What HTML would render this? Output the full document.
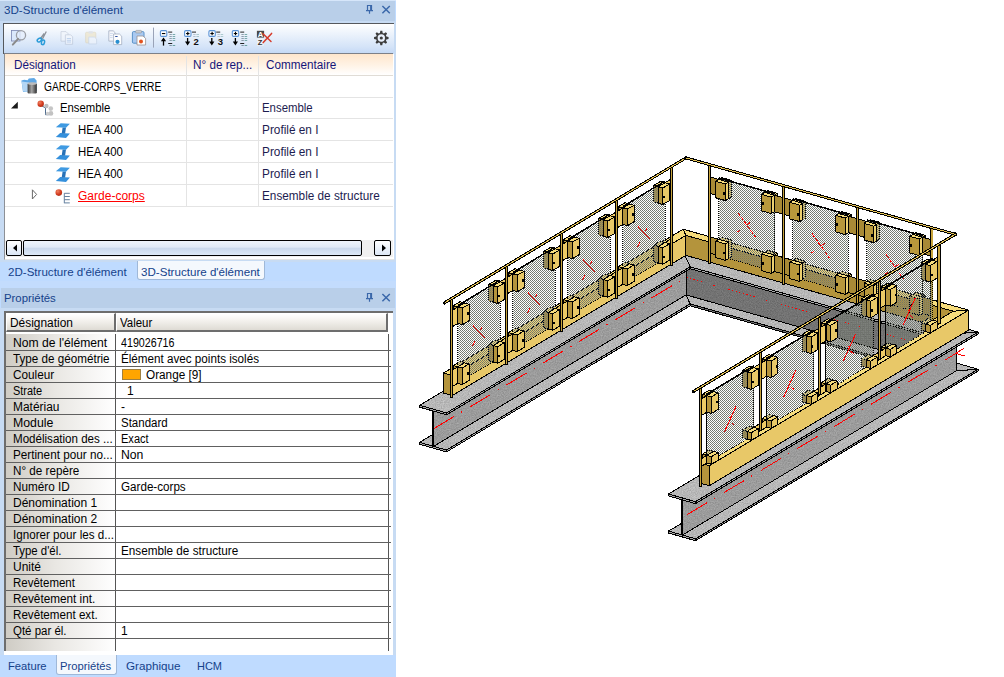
<!DOCTYPE html>
<html><head><meta charset="utf-8"><title>3D-Structure</title><style>
html,body{margin:0;padding:0;background:#fff;}
body{width:1004px;height:677px;position:relative;overflow:hidden;font-family:"Liberation Sans",sans-serif;}
.abs{position:absolute;white-space:nowrap;}
.t11{font-size:11.5px;line-height:14px;}
.t12h{font-size:12px;line-height:15px;color:#15157a;}
.t12r{font-size:12px;line-height:15px;color:#000;}
.red{color:#ff0000;text-decoration:underline;}
.t12p{font-size:12px;line-height:16px;color:#000;margin-top:1px;}
.hc{box-sizing:border-box;background:linear-gradient(#ffffff 0%,#f4f2ee 40%,#dedbd4 100%);border-top:1px solid #fff;border-left:1px solid #fff;border-right:2px solid #6d6d6d;border-bottom:2px solid #6d6d6d;}
</style></head><body>
<div class="abs" style="left:0;top:0;width:396px;height:677px;background:#bfdbff"></div>
<div class="abs" style="left:0;top:0;width:396px;height:1px;background:#d6e6fa"></div>
<div class="abs" style="left:0;top:1px;width:395px;height:20px;background:#b9cfe9"></div>
<div class="abs t11" style="left:4px;top:3px;color:#15428b;transform:scaleX(1.0086);transform-origin:0 0" id="t1">3D-Structure d'élément</div>
<svg class="abs" style="left:364px;top:4px" width="30" height="12" viewBox="0 0 30 12"><g fill="none" stroke="#3b68aa" stroke-width="1.2"><path d="M3.5 1.5h4v5h-4z M2 6.6h7 M5.5 6.6v3.2" /><path d="M6.9 1.5v5" stroke-width="1.6"/><path d="M18.4 2l7.4 7.2 M25.8 2l-7.4 7.2" stroke-width="1.5"/></g></svg>
<div class="abs" style="left:0;top:21px;width:396px;height:241px;background:#c7dbf3"></div>
<div class="abs" style="left:3px;top:23px;width:391px;height:31px;background:linear-gradient(#ffffff 0%,#eef4fc 30%,#d5e4f8 75%,#c3d8f5 100%);border-top:1px solid #55585c;border-left:1px solid #55585c;box-sizing:border-box"></div>
<div class="abs" style="left:4px;top:53px;width:389px;height:1px;background:#7d8088"></div>
<svg class="abs" style="left:0;top:0" width="396" height="60" viewBox="0 0 396 60">
<rect x="11.5" y="30.5" width="8.5" height="10.5" fill="#dbe8fb" stroke="#7a86b0" stroke-width="0.8"/>
<circle cx="21" cy="35.2" r="4.6" fill="#e4eefc" fill-opacity="0.75" stroke="#9a9da4" stroke-width="1.3"/>
<path d="M18.1 38.9L12.8 44.6" stroke="#8a8a8a" stroke-width="2" stroke-linecap="round"/>
<path d="M46.3 31.5L42.2 39.5 M44.2 33.5L40.2 39" stroke="#8d9299" stroke-width="1.3" fill="none"/>
<ellipse cx="39.4" cy="40" rx="2.4" ry="1.6" transform="rotate(-35 39.4 40)" fill="none" stroke="#2a9bd8" stroke-width="1.5"/>
<ellipse cx="43" cy="42.3" rx="1.5" ry="2.4" transform="rotate(15 43 42.3)" fill="none" stroke="#2a9bd8" stroke-width="1.5"/>
<g opacity="0.55"><path d="M61 31.6h5l2 2v7.6h-7z" fill="#f4f7fb" stroke="#a9b4c6" stroke-width="0.8"/><path d="M65.4 34.8h5.2l2 2v7.5h-7.2z" fill="#f8fafd" stroke="#a9b4c6" stroke-width="0.8"/><path d="M66.8 38.5h4.2M66.8 40.3h4.2M66.8 42h4.2" stroke="#8fb0dc" stroke-width="0.8"/></g>
<g opacity="0.6"><rect x="85.6" y="32.3" width="10.2" height="10.6" rx="1" fill="#efe3c0" stroke="#d8cba8" stroke-width="0.7"/><rect x="88.4" y="31.2" width="4.6" height="2.2" rx="1" fill="#d5d8de"/><path d="M88.8 37.1h5.6l2.2 2v4.8h-7.8z" fill="#f2f6fc" stroke="#b9c6dc" stroke-width="0.7"/></g>
<path d="M108.8 30.8h4.4l1.9 1.9v8.4h-6.3z" fill="#f6f8fc" stroke="#a3aec2" stroke-width="0.8"/>
<path d="M113.6 34h5.8l2.3 2.2v8.4h-8.1z" fill="#fff" stroke="#a3aec2" stroke-width="0.8"/>
<rect x="115.2" y="36" width="2.4" height="1" fill="#2c4f9e"/><path d="M110 33.5h3M110 35.5h2.6M110 37.5h2.6" stroke="#c5d3ea" stroke-width="0.7"/>
<circle cx="117.5" cy="41.8" r="2.1" fill="#2a8fd0"/>
<rect x="132.4" y="31.6" width="11.6" height="11.6" rx="1.2" fill="#a9c9f1" stroke="#5b93c9" stroke-width="1"/>
<rect x="135.6" y="30.4" width="6" height="2.6" rx="1" fill="#c9ccd2" stroke="#8e939b" stroke-width="0.6"/>
<path d="M137 36h6l2.6 2.4v6.6h-8.6z" fill="#fff" stroke="#9a8f8f" stroke-width="0.8"/>
<circle cx="141" cy="41.5" r="2" fill="#e2531f"/>
<rect x="153" y="27.6" width="1" height="20" fill="#9aa3b8"/>
<rect x="160.4" y="30.6" width="6.4" height="5.8" rx="1.2" fill="#fff" stroke="#5a92d6" stroke-width="1.1"/>
<rect x="161.9" y="33" width="3.4" height="1.1" fill="#000"/>
<path d="M163.5 45.6V39.5" stroke="#000" stroke-width="1.3"/><path d="M160.9 41.2L163.5 37.6L166.1 41.2z" fill="#000"/>
<rect x="168.2" y="31.6" width="4" height="1" fill="#222"/>
<rect x="169.39999999999998" y="34" width="2.4" height="0.9" fill="#7a8a9a" opacity="0.9"/><rect x="172.6" y="34" width="2.6" height="0.9" fill="#5f9a9a" opacity="0.9"/>
<rect x="169.39999999999998" y="36" width="2.4" height="0.9" fill="#7a8a9a" opacity="0.9"/><rect x="172.6" y="36" width="2.6" height="0.9" fill="#5f9a9a" opacity="0.9"/>
<rect x="169.39999999999998" y="38" width="2.4" height="0.9" fill="#7a8a9a" opacity="0.9"/><rect x="172.6" y="38" width="2.6" height="0.9" fill="#5f9a9a" opacity="0.9"/>
<rect x="169.39999999999998" y="40" width="2.4" height="0.9" fill="#7a8a9a" opacity="0.9"/><rect x="172.6" y="40" width="2.6" height="0.9" fill="#5f9a9a" opacity="0.9"/>
<rect x="168.2" y="43" width="4" height="1" fill="#222"/>
<rect x="169.39999999999998" y="45" width="2.4" height="0.9" fill="#7a8a9a"/><rect x="172.6" y="45" width="2.6" height="0.9" fill="#5f9a9a"/>
<rect x="184.6" y="30.6" width="6.4" height="5.8" rx="1.2" fill="#fff" stroke="#5a92d6" stroke-width="1.1"/>
<rect x="186.1" y="33" width="3.4" height="1.1" fill="#000"/>
<rect x="187.25" y="31.8" width="1.1" height="3.4" fill="#000"/>
<path d="M187.6 38V43.5" stroke="#000" stroke-width="1.3"/><path d="M185.0 41.6L187.6 45.4L190.2 41.6z" fill="#000"/>
<rect x="192" y="31.6" width="4" height="1" fill="#222"/>
<rect x="193.2" y="34" width="2.4" height="0.9" fill="#7a8a9a" opacity="0.5"/><rect x="196.4" y="34" width="2.6" height="0.9" fill="#5f9a9a" opacity="0.5"/>
<rect x="193.2" y="36" width="2.4" height="0.9" fill="#7a8a9a" opacity="0.5"/><rect x="196.4" y="36" width="2.6" height="0.9" fill="#5f9a9a" opacity="0.5"/>
<text x="193.6" y="44.6" font-family="Liberation Sans, sans-serif" font-weight="bold" font-size="9.5" fill="#111">2</text>
<rect x="208.9" y="30.6" width="6.4" height="5.8" rx="1.2" fill="#fff" stroke="#5a92d6" stroke-width="1.1"/>
<rect x="210.4" y="33" width="3.4" height="1.1" fill="#000"/>
<rect x="211.55" y="31.8" width="1.1" height="3.4" fill="#000"/>
<path d="M211.8 38V43.5" stroke="#000" stroke-width="1.3"/><path d="M209.20000000000002 41.6L211.8 45.4L214.4 41.6z" fill="#000"/>
<rect x="216.2" y="31.6" width="4" height="1" fill="#222"/>
<rect x="217.39999999999998" y="34" width="2.4" height="0.9" fill="#7a8a9a" opacity="0.5"/><rect x="220.6" y="34" width="2.6" height="0.9" fill="#5f9a9a" opacity="0.5"/>
<rect x="217.39999999999998" y="36" width="2.4" height="0.9" fill="#7a8a9a" opacity="0.5"/><rect x="220.6" y="36" width="2.6" height="0.9" fill="#5f9a9a" opacity="0.5"/>
<text x="217.8" y="44.6" font-family="Liberation Sans, sans-serif" font-weight="bold" font-size="9.5" fill="#111">3</text>
<rect x="232.3" y="30.6" width="6.4" height="5.8" rx="1.2" fill="#fff" stroke="#5a92d6" stroke-width="1.1"/>
<rect x="233.8" y="33" width="3.4" height="1.1" fill="#000"/>
<rect x="234.95000000000002" y="31.8" width="1.1" height="3.4" fill="#000"/>
<path d="M235.4 38V43.5" stroke="#000" stroke-width="1.3"/><path d="M232.8 41.6L235.4 45.4L238.0 41.6z" fill="#000"/>
<rect x="240.2" y="31.6" width="4" height="1" fill="#222"/>
<rect x="241.39999999999998" y="34" width="2.4" height="0.9" fill="#7a8a9a" opacity="0.9"/><rect x="244.6" y="34" width="2.6" height="0.9" fill="#5f9a9a" opacity="0.9"/>
<rect x="241.39999999999998" y="36" width="2.4" height="0.9" fill="#7a8a9a" opacity="0.9"/><rect x="244.6" y="36" width="2.6" height="0.9" fill="#5f9a9a" opacity="0.9"/>
<rect x="241.39999999999998" y="38" width="2.4" height="0.9" fill="#7a8a9a" opacity="0.9"/><rect x="244.6" y="38" width="2.6" height="0.9" fill="#5f9a9a" opacity="0.9"/>
<rect x="241.39999999999998" y="40" width="2.4" height="0.9" fill="#7a8a9a" opacity="0.9"/><rect x="244.6" y="40" width="2.6" height="0.9" fill="#5f9a9a" opacity="0.9"/>
<rect x="240.2" y="43" width="4" height="1" fill="#222"/>
<rect x="241.39999999999998" y="45" width="2.4" height="0.9" fill="#7a8a9a"/><rect x="244.6" y="45" width="2.6" height="0.9" fill="#5f9a9a"/>
<rect x="256.9" y="30.8" width="7.2" height="6.8" fill="#4a4a4a"/>
<text x="257.7" y="37" font-family="Liberation Sans, sans-serif" font-weight="bold" font-size="7.5" fill="#fff">A</text>
<rect x="257.2" y="38.8" width="6.6" height="6.8" fill="#f0f2f6"/>
<text x="257.8" y="45.2" font-family="Liberation Sans, sans-serif" font-weight="bold" font-size="7.5" fill="#333">Z</text>
<path d="M263 33.8L271 41.5 M271.6 33.4L263.2 42.6" stroke="#d63a2a" stroke-width="1.5" stroke-linecap="round" fill="none"/>
<path d="M379.89 32.89 L380.35 30.76 L382.25 30.76 L382.71 32.89 L383.91 33.39 L385.75 32.21 L387.09 33.55 L385.91 35.39 L386.41 36.59 L388.54 37.05 L388.54 38.95 L386.41 39.41 L385.91 40.61 L387.09 42.45 L385.75 43.79 L383.91 42.61 L382.71 43.11 L382.25 45.24 L380.35 45.24 L379.89 43.11 L378.69 42.61 L376.85 43.79 L375.51 42.45 L376.69 40.61 L376.19 39.41 L374.06 38.95 L374.06 37.05 L376.19 36.59 L376.69 35.39 L375.51 33.55 L376.85 32.21 L378.69 33.39z" fill="#3d3d3d"/>
<circle cx="381.3" cy="38" r="3.7" fill="#e9f0fb"/>
<circle cx="381.3" cy="38" r="1.6" fill="#3d3d3d"/>
</svg>
<div class="abs" style="left:4px;top:54px;width:390px;height:206px;background:#fff;border-left:1px solid #8c9096;border-bottom:1px solid #e3e3e3;box-sizing:border-box"></div>
<div class="abs" style="left:5px;top:54px;width:388px;height:22px;background:linear-gradient(#ffe6cc 0%,#fff3e6 55%,#ffffff 100%);border-bottom:1px solid #e0dcd6;box-sizing:border-box"></div>
<div class="abs" style="left:186px;top:56px;width:1px;height:150px;background:#e4e4e4"></div>
<div class="abs" style="left:258px;top:56px;width:1px;height:150px;background:#e4e4e4"></div>
<div class="abs t12h" style="left:14px;top:58px;transform:scaleX(0.9736);transform-origin:0 0" id="h1">Désignation</div>
<div class="abs t12h" style="left:193px;top:58px;transform:scaleX(0.9749);transform-origin:0 0" id="h2">N° de rep...</div>
<div class="abs t12h" style="left:266px;top:58px;transform:scaleX(0.976);transform-origin:0 0" id="h3">Commentaire</div>
<div class="abs" style="left:5px;top:97px;width:388px;height:1px;background:#e4e4e4"></div>
<div class="abs t12r" style="left:44px;top:80px;transform:scaleX(0.8539);transform-origin:0 0" id="r1a">GARDE-CORPS_VERRE</div>
<div class="abs" style="left:5px;top:118px;width:388px;height:1px;background:#e4e4e4"></div>
<div class="abs t12r" style="left:60px;top:101px;transform:scaleX(0.9443);transform-origin:0 0" id="r2a">Ensemble</div>
<div class="abs t12r" style="left:262px;top:101px;color:#1c1c50;transform:scaleX(0.9499);transform-origin:0 0" id="r2b">Ensemble</div>
<div class="abs" style="left:5px;top:140px;width:388px;height:1px;background:#e4e4e4"></div>
<div class="abs t12r" style="left:78px;top:123px;transform:scaleX(0.9478);transform-origin:0 0" id="r3a">HEA 400</div>
<div class="abs t12r" style="left:262px;top:123px;color:#1c1c50;transform:scaleX(0.9847);transform-origin:0 0" id="r3b">Profilé en I</div>
<div class="abs" style="left:5px;top:162px;width:388px;height:1px;background:#e4e4e4"></div>
<div class="abs t12r" style="left:78px;top:145px;transform:scaleX(0.9478);transform-origin:0 0" id="r4a">HEA 400</div>
<div class="abs t12r" style="left:262px;top:145px;color:#1c1c50;transform:scaleX(0.9847);transform-origin:0 0" id="r4b">Profilé en I</div>
<div class="abs" style="left:5px;top:184px;width:388px;height:1px;background:#e4e4e4"></div>
<div class="abs t12r" style="left:78px;top:167px;transform:scaleX(0.9478);transform-origin:0 0" id="r5a">HEA 400</div>
<div class="abs t12r" style="left:262px;top:167px;color:#1c1c50;transform:scaleX(0.9847);transform-origin:0 0" id="r5b">Profilé en I</div>
<div class="abs" style="left:5px;top:206px;width:388px;height:1px;background:#e4e4e4"></div>
<div class="abs t12r red" style="left:78px;top:189px;transform:scaleX(1.0015);transform-origin:0 0" id="r6a">Garde-corps</div>
<div class="abs t12r" style="left:262px;top:189px;color:#1c1c50;transform:scaleX(0.9803);transform-origin:0 0" id="r6b">Ensemble de structure</div>
<svg class="abs" style="left:0;top:76px" width="100" height="135" viewBox="0 76 100 135">
<defs><linearGradient id="cyl" x1="0" x2="1"><stop offset="0" stop-color="#3a3a3a"/><stop offset="0.45" stop-color="#a5a5a5"/><stop offset="1" stop-color="#2e2e2e"/></linearGradient><radialGradient id="rs" cx="0.35" cy="0.3" r="0.8"><stop offset="0" stop-color="#f08060"/><stop offset="0.6" stop-color="#d23a1e"/><stop offset="1" stop-color="#a52a12"/></radialGradient></defs>
<path d="M21.4 80.6l2.8-0.8 3.4 0.4 1.2-1.6 5.4-0.6 2.4 2.4v10.6l-13.6 0.8z" fill="#5fa8e6"/>
<path d="M21.6 81.6l7.4 1 0.6 9-6.6-0.6z" fill="#b4d6f4"/>
<rect x="27.6" y="83.4" width="9.2" height="10" rx="1.2" fill="url(#cyl)"/>
<ellipse cx="32.2" cy="83.6" rx="4.6" ry="1.3" fill="#bdbdbd"/>
<path d="M17.8 101.8V108.6H11z" fill="#1a1a1a"/>
<path d="M41.5 105.5l4 2.6v6.6h4" fill="none" stroke="#4f6d8f" stroke-width="1"/>
<circle cx="46.4" cy="106" r="2.2" fill="#bdbdbd"/><circle cx="50.8" cy="108.6" r="2.3" fill="#c6c6c6"/><circle cx="51" cy="113.4" r="2.3" fill="#c2c2c2"/><circle cx="47.6" cy="113.6" r="1.8" fill="#cdcdcd"/>
<circle cx="40.7" cy="103.8" r="3.2" fill="url(#rs)"/>
<g transform="translate(0 0.0)"><path d="M60.2 133L69.9 133.5L66 137.9L55.8 136.9z" fill="#3590dc"/><path d="M62.6 127.4H66L65.1 133.6H61.7z" fill="#2772b8"/><path d="M60.7 123.3L69.9 123.8L66 127.7L55.8 127.2z" fill="#3f9ae2"/></g>
<g transform="translate(0 22.0)"><path d="M60.2 133L69.9 133.5L66 137.9L55.8 136.9z" fill="#3590dc"/><path d="M62.6 127.4H66L65.1 133.6H61.7z" fill="#2772b8"/><path d="M60.7 123.3L69.9 123.8L66 127.7L55.8 127.2z" fill="#3f9ae2"/></g>
<g transform="translate(0 44.0)"><path d="M60.2 133L69.9 133.5L66 137.9L55.8 136.9z" fill="#3590dc"/><path d="M62.6 127.4H66L65.1 133.6H61.7z" fill="#2772b8"/><path d="M60.7 123.3L69.9 123.8L66 127.7L55.8 127.2z" fill="#3f9ae2"/></g>
<path d="M32.4 189.8L36.6 194.4L32.4 199z" fill="#fff" stroke="#6a6a6a" stroke-width="1"/>
<path d="M64.3 193.2V203.2 M64.3 193.3H69.8 M64.3 196.5H69.8 M64.3 199.7H69.8 M64.3 202.9H69.8" stroke="#64809f" stroke-width="1" fill="none"/>
<circle cx="58.8" cy="192.6" r="3.3" fill="url(#rs)"/>
</svg>
<div class="abs" style="left:5px;top:240px;width:388px;height:17px;background:#f0f0f0"></div>
<div class="abs" style="left:6px;top:240px;width:16px;height:16px;border:1px solid #000;border-radius:2px;box-sizing:border-box;background:linear-gradient(#fff,#dbe6f5)"></div>
<div class="abs" style="left:23px;top:240px;width:339px;height:16px;border:1px solid #000;border-radius:2px;box-sizing:border-box;background:linear-gradient(#eef4fb 0%,#dfe9f6 45%,#c9d8ec 50%,#dde8f6 100%)"></div>
<div class="abs" style="left:374px;top:240px;width:17px;height:16px;border:1px solid #000;border-radius:2px;box-sizing:border-box;background:linear-gradient(#fff,#dbe6f5)"></div>
<svg class="abs" style="left:6px;top:240px" width="388" height="16"><path d="M11 4.5v7l-4-3.5z M376 4.5v7l4-3.5z" fill="#000"/></svg>
<div class="abs" style="left:0;top:262px;width:396px;height:20px;background:#bfdbff"></div>
<div class="abs" style="left:137px;top:261px;width:128px;height:19px;background:#f4f8fd;border:1px solid #9fb8d8;border-top:none;border-radius:0 0 3px 3px;box-sizing:border-box"></div>
<div class="abs t11" style="left:8px;top:265px;color:#15428b;transform:scaleX(1.006);transform-origin:0 0" id="tb1">2D-Structure d'élément</div>
<div class="abs t11" style="left:141px;top:265px;color:#15428b;transform:scaleX(1.0077);transform-origin:0 0" id="tb2">3D-Structure d'élément</div>
<div class="abs" style="left:0;top:281px;width:396px;height:7px;background:#c3dcfd"></div>
<div class="abs" style="left:1px;top:288px;width:394px;height:20px;background:#b9cfe9"></div>
<div class="abs t11" style="left:4px;top:291px;color:#15428b;transform:scaleX(0.9881);transform-origin:0 0" id="t2">Propriétés</div>
<svg class="abs" style="left:364px;top:292px" width="30" height="12" viewBox="0 0 30 12"><g fill="none" stroke="#3b68aa" stroke-width="1.2"><path d="M3.5 1.5h4v5h-4z M2 6.6h7 M5.5 6.6v3.2" /><path d="M6.9 1.5v5" stroke-width="1.6"/><path d="M18.4 2l7.4 7.2 M25.8 2l-7.4 7.2" stroke-width="1.5"/></g></svg>
<div class="abs" style="left:0;top:308px;width:396px;height:347px;background:#c7dbf3"></div>
<div class="abs" style="left:4px;top:311px;width:389px;height:344px;background:#fff;border-top:2px solid #6d6d6d;border-left:2px solid #6d6d6d;box-sizing:border-box"></div>
<div class="abs hc" style="left:6px;top:313px;width:110px;height:19px"></div>
<div class="abs hc" style="left:116px;top:313px;width:272px;height:19px"></div>
<div class="abs t12p" style="left:10px;top:314px;transform:scaleX(0.9925);transform-origin:0 0" id="ph1">Désignation</div>
<div class="abs t12p" style="left:120px;top:314px;transform:scaleX(0.9528);transform-origin:0 0" id="ph2">Valeur</div>
<div class="abs" style="left:6px;top:334px;width:110px;height:317px;background:linear-gradient(90deg,#cfccc5 0%,#e9e7e3 45%,#ffffff 100%)"></div>
<div class="abs" style="left:115px;top:334px;width:1px;height:317px;background:#555"></div>
<div class="abs" style="left:388px;top:334px;width:1px;height:317px;background:#555"></div>
<div class="abs" style="left:6px;top:350px;width:385px;height:1px;background:#606060"></div>
<div class="abs t12p" style="left:13.4px;top:334px;transform:scaleX(1.013);transform-origin:0 0" id="p0a">Nom de l'élément</div>
<div class="abs t12p" style="left:121px;top:334px;transform:scaleX(0.8905);transform-origin:0 0" id="p0b">419026716</div>
<div class="abs" style="left:6px;top:366px;width:385px;height:1px;background:#606060"></div>
<div class="abs t12p" style="left:13.4px;top:350px;transform:scaleX(0.9719);transform-origin:0 0" id="p1a">Type de géométrie</div>
<div class="abs t12p" style="left:121px;top:350px;transform:scaleX(0.9713);transform-origin:0 0" id="p1b">Élément avec points isolés</div>
<div class="abs" style="left:6px;top:382px;width:385px;height:1px;background:#606060"></div>
<div class="abs t12p" style="left:13.4px;top:366px;transform:scaleX(0.9804);transform-origin:0 0" id="p2a">Couleur</div>
<div class="abs t12p" style="left:146px;top:366px;transform:scaleX(0.9805);transform-origin:0 0" id="p2b">Orange [9]</div>
<div class="abs" style="left:6px;top:398px;width:385px;height:1px;background:#606060"></div>
<div class="abs t12p" style="left:13.4px;top:382px;transform:scaleX(0.9123);transform-origin:0 0" id="p3a">Strate</div>
<div class="abs t12p" style="left:127px;top:382px" id="p3b">1</div>
<div class="abs" style="left:6px;top:414px;width:385px;height:1px;background:#606060"></div>
<div class="abs t12p" style="left:13.4px;top:398px;transform:scaleX(0.994);transform-origin:0 0" id="p4a">Matériau</div>
<div class="abs t12p" style="left:121px;top:398px" id="p4b">-</div>
<div class="abs" style="left:6px;top:430px;width:385px;height:1px;background:#606060"></div>
<div class="abs t12p" style="left:13.4px;top:414px;transform:scaleX(1.0267);transform-origin:0 0" id="p5a">Module</div>
<div class="abs t12p" style="left:121px;top:414px;transform:scaleX(0.9589);transform-origin:0 0" id="p5b">Standard</div>
<div class="abs" style="left:6px;top:446px;width:385px;height:1px;background:#606060"></div>
<div class="abs t12p" style="left:13.4px;top:430px;transform:scaleX(0.9644);transform-origin:0 0" id="p6a">Modélisation des ...</div>
<div class="abs t12p" style="left:121px;top:430px;transform:scaleX(0.9195);transform-origin:0 0" id="p6b">Exact</div>
<div class="abs" style="left:6px;top:462px;width:385px;height:1px;background:#606060"></div>
<div class="abs t12p" style="left:13.4px;top:446px;transform:scaleX(0.9768);transform-origin:0 0" id="p7a">Pertinent pour no...</div>
<div class="abs t12p" style="left:121px;top:446px;transform:scaleX(1.0175);transform-origin:0 0" id="p7b">Non</div>
<div class="abs" style="left:6px;top:478px;width:385px;height:1px;background:#606060"></div>
<div class="abs t12p" style="left:13.4px;top:462px;transform:scaleX(0.9727);transform-origin:0 0" id="p8a">N° de repère</div>
<div class="abs" style="left:6px;top:494px;width:385px;height:1px;background:#606060"></div>
<div class="abs t12p" style="left:13.4px;top:478px;transform:scaleX(0.9775);transform-origin:0 0" id="p9a">Numéro ID</div>
<div class="abs t12p" style="left:121px;top:478px;transform:scaleX(0.97);transform-origin:0 0" id="p9b">Garde-corps</div>
<div class="abs" style="left:6px;top:510px;width:385px;height:1px;background:#606060"></div>
<div class="abs t12p" style="left:13.4px;top:494px;transform:scaleX(1.0017);transform-origin:0 0" id="p10a">Dénomination 1</div>
<div class="abs" style="left:6px;top:526px;width:385px;height:1px;background:#606060"></div>
<div class="abs t12p" style="left:13.4px;top:510px;transform:scaleX(1.0017);transform-origin:0 0" id="p11a">Dénomination 2</div>
<div class="abs" style="left:6px;top:542px;width:385px;height:1px;background:#606060"></div>
<div class="abs t12p" style="left:13.4px;top:526px;transform:scaleX(0.9697);transform-origin:0 0" id="p12a">Ignorer pour les d...</div>
<div class="abs" style="left:6px;top:558px;width:385px;height:1px;background:#606060"></div>
<div class="abs t12p" style="left:13.4px;top:542px;transform:scaleX(0.9492);transform-origin:0 0" id="p13a">Type d'él.</div>
<div class="abs t12p" style="left:121px;top:542px;transform:scaleX(0.9762);transform-origin:0 0" id="p13b">Ensemble de structure</div>
<div class="abs" style="left:6px;top:574px;width:385px;height:1px;background:#606060"></div>
<div class="abs t12p" style="left:13.4px;top:558px;transform:scaleX(0.9998);transform-origin:0 0" id="p14a">Unité</div>
<div class="abs" style="left:6px;top:590px;width:385px;height:1px;background:#606060"></div>
<div class="abs t12p" style="left:13.4px;top:574px;transform:scaleX(0.9568);transform-origin:0 0" id="p15a">Revêtement</div>
<div class="abs" style="left:6px;top:606px;width:385px;height:1px;background:#606060"></div>
<div class="abs t12p" style="left:13.4px;top:590px;transform:scaleX(0.9781);transform-origin:0 0" id="p16a">Revêtement int.</div>
<div class="abs" style="left:6px;top:622px;width:385px;height:1px;background:#606060"></div>
<div class="abs t12p" style="left:13.4px;top:606px;transform:scaleX(0.9683);transform-origin:0 0" id="p17a">Revêtement ext.</div>
<div class="abs" style="left:6px;top:638px;width:385px;height:1px;background:#606060"></div>
<div class="abs t12p" style="left:13.4px;top:622px;transform:scaleX(0.955);transform-origin:0 0" id="p18a">Qté par él.</div>
<div class="abs t12p" style="left:121px;top:622px" id="p18b">1</div>
<div class="abs" style="left:122px;top:369px;width:19px;height:11px;background:#ffa500;border:1px solid #a08040;box-sizing:border-box"></div>
<div class="abs" style="left:4px;top:651px;width:389px;height:4px;background:#fff"></div>
<div class="abs" style="left:0;top:655px;width:396px;height:22px;background:#bfdbff"></div>
<div class="abs" style="left:56px;top:655px;width:61px;height:20px;background:#f4f8fd;border:1px solid #9fb8d8;border-top:none;border-radius:0 0 3px 3px;box-sizing:border-box"></div>
<div class="abs t11" style="left:8px;top:659px;color:#15428b;transform:scaleX(0.9737);transform-origin:0 0" id="bt1">Feature</div>
<div class="abs t11" style="left:60px;top:659px;color:#15428b;transform:scaleX(0.9767);transform-origin:0 0" id="bt2">Propriétés</div>
<div class="abs t11" style="left:126px;top:659px;color:#15428b;transform:scaleX(1.0145);transform-origin:0 0" id="bt3">Graphique</div>
<div class="abs t11" style="left:197px;top:659px;color:#15428b;transform:scaleX(0.9541);transform-origin:0 0" id="bt4">HCM</div>
<svg class="abs" style="left:0;top:0" width="1004" height="677" viewBox="0 0 1004 677" shape-rendering="crispEdges"><defs>
<pattern id="glass" width="2" height="2" patternUnits="userSpaceOnUse"><rect x="0" y="0" width="1" height="1" fill="#70766c"/><rect x="1" y="1" width="1" height="1" fill="#7c8278"/></pattern>
<filter id="noise" x="0" y="0" width="100%" height="100%"><feTurbulence type="fractalNoise" baseFrequency="0.9" numOctaves="1" seed="3" result="n"/><feColorMatrix in="n" type="matrix" values="0 0 0 0 0  0 0 0 0 0  0 0 0 0 0  1.6 0 0 0 -0.62"/><feComposite in2="SourceGraphic" operator="in"/></filter>
<filter id="fTop" color-interpolation-filters="sRGB" x="0" y="0" width="100%" height="100%"><feTurbulence type="fractalNoise" baseFrequency="0.85" numOctaves="2" seed="2"/><feColorMatrix type="matrix" values="0.24 0 0 0 0.60  0.24 0 0 0 0.60  0.24 0 0 0 0.60  0 0 0 0 1"/></filter>
<filter id="fB" color-interpolation-filters="sRGB" x="0" y="0" width="100%" height="100%"><feTurbulence type="fractalNoise" baseFrequency="0.85" numOctaves="2" seed="5"/><feColorMatrix type="matrix" values="0.2 0 0 0 0.51  0.2 0 0 0 0.51  0.2 0 0 0 0.51  0 0 0 0 1"/></filter>
<filter id="fA" color-interpolation-filters="sRGB" x="0" y="0" width="100%" height="100%"><feTurbulence type="fractalNoise" baseFrequency="0.85" numOctaves="2" seed="9"/><feColorMatrix type="matrix" values="0.18 0 0 0 0.36  0.18 0 0 0 0.36  0.18 0 0 0 0.36  0 0 0 0 1"/></filter>
<pattern id="stTop" width="200" height="200" patternUnits="userSpaceOnUse"><rect width="200" height="200" fill="#b9b9b9" filter="url(#fTop)"/></pattern>
<pattern id="stB" width="200" height="200" patternUnits="userSpaceOnUse"><rect width="200" height="200" fill="#9e9e9e" filter="url(#fB)"/></pattern>
<pattern id="stA" width="200" height="200" patternUnits="userSpaceOnUse"><rect width="200" height="200" fill="#7d7d7d" filter="url(#fA)"/></pattern>
</defs>
<g stroke-linejoin="round"><polygon points="690.1,303.9 932.6,372.7 978.1,369.2 681.7,285.2" fill="url(#stTop)" stroke="#000" stroke-width="1" />
<polygon points="690.1,305.8 932.6,374.6 932.6,372.7 690.1,303.9" fill="url(#stA)" stroke="#000" stroke-width="1" />
<polygon points="686.0,294.9 954.5,371.0 954.5,335.8 686.0,259.7" fill="url(#stA)" stroke="#000" stroke-width="1" />
<line x1="686.4" y1="277.4" x2="703.0" y2="282.1" stroke="#f00" stroke-width="1" stroke-dasharray="1.3 2.4"/>
<line x1="713.3" y1="285.0" x2="714.7" y2="285.4" stroke="#f00" stroke-width="1" />
<line x1="728.5" y1="289.3" x2="755.6" y2="297.0" stroke="#f00" stroke-width="1" stroke-dasharray="1.3 2.4"/>
<line x1="765.9" y1="299.9" x2="767.4" y2="300.3" stroke="#f00" stroke-width="1" />
<line x1="781.1" y1="304.2" x2="808.2" y2="311.9" stroke="#f00" stroke-width="1" stroke-dasharray="1.3 2.4"/>
<line x1="818.6" y1="314.9" x2="820.0" y2="315.3" stroke="#f00" stroke-width="1" />
<line x1="833.8" y1="319.2" x2="860.9" y2="326.9" stroke="#f00" stroke-width="1" stroke-dasharray="1.3 2.4"/>
<line x1="871.2" y1="329.8" x2="872.7" y2="330.2" stroke="#f00" stroke-width="1" />
<line x1="886.4" y1="334.1" x2="913.5" y2="341.8" stroke="#f00" stroke-width="1" stroke-dasharray="1.3 2.4"/>
<line x1="923.9" y1="344.7" x2="925.3" y2="345.1" stroke="#f00" stroke-width="1" />
<line x1="939.0" y1="349.0" x2="954.1" y2="353.3" stroke="#f00" stroke-width="1" stroke-dasharray="1.3 2.4"/>
<polygon points="690.1,268.7 932.6,337.5 932.6,335.6 690.1,266.8" fill="#a8a8a8" stroke="#000" stroke-width="1" />
<polygon points="690.1,266.8 932.6,335.6 978.1,332.1 681.7,248.1" fill="url(#stTop)" stroke="#000" stroke-width="1" />
<polygon points="433.6,446.4 446.5,450.0 690.1,303.9 686.0,294.9" fill="url(#stTop)" stroke="#000" stroke-width="1" />
<polygon points="446.5,451.9 690.1,305.8 690.1,303.9 446.5,450.0" fill="#a8a8a8" stroke="#000" stroke-width="1" />
<polygon points="419.6,444.3 446.5,451.9 446.5,450.0 419.6,442.4" fill="#a8a8a8" stroke="#000" stroke-width="1" />
<polygon points="419.6,442.4 432.6,446.1 432.6,434.6" fill="url(#stTop)" stroke="#000" stroke-width="1" />
<polygon points="433.6,446.4 686.0,294.9 686.0,259.7 433.6,411.2" fill="url(#stB)" stroke="#000" stroke-width="1" />
<polygon points="432.6,446.1 433.6,446.4 433.6,411.2 432.6,410.9" fill="#000" stroke="#000" stroke-width="1" />
<line x1="433.9" y1="428.6" x2="453.9" y2="416.5" stroke="#f00" stroke-width="1" />
<line x1="461.2" y1="412.2" x2="462.4" y2="411.5" stroke="#f00" stroke-width="1" />
<line x1="470.2" y1="406.8" x2="490.3" y2="394.7" stroke="#f00" stroke-width="1" />
<line x1="497.5" y1="390.4" x2="498.7" y2="389.7" stroke="#f00" stroke-width="1" />
<line x1="506.5" y1="385.0" x2="526.6" y2="373.0" stroke="#f00" stroke-width="1" />
<line x1="533.8" y1="368.6" x2="535.0" y2="367.9" stroke="#f00" stroke-width="1" />
<line x1="542.8" y1="363.2" x2="562.9" y2="351.2" stroke="#f00" stroke-width="1" />
<line x1="570.1" y1="346.8" x2="571.3" y2="346.1" stroke="#f00" stroke-width="1" />
<line x1="579.1" y1="341.4" x2="599.2" y2="329.4" stroke="#f00" stroke-width="1" />
<line x1="606.4" y1="325.1" x2="607.6" y2="324.3" stroke="#f00" stroke-width="1" />
<line x1="615.4" y1="319.6" x2="635.5" y2="307.6" stroke="#f00" stroke-width="1" />
<line x1="642.7" y1="303.3" x2="644.0" y2="302.5" stroke="#f00" stroke-width="1" />
<line x1="651.7" y1="297.9" x2="671.8" y2="285.8" stroke="#f00" stroke-width="1" />
<line x1="679.0" y1="281.5" x2="680.3" y2="280.7" stroke="#f00" stroke-width="1" />
<polygon points="446.5,414.8 690.1,268.7 690.1,266.8 446.5,412.9" fill="#a8a8a8" stroke="#000" stroke-width="1" />
<polygon points="419.6,407.2 446.5,414.8 446.5,412.9 419.6,405.3" fill="#a8a8a8" stroke="#000" stroke-width="1" />
<polygon points="419.6,405.3 446.5,412.9 690.1,266.8 681.7,248.1" fill="url(#stTop)" stroke="#000" stroke-width="1" />
<line x1="690.1" y1="266.8" x2="681.7" y2="248.1" stroke="#000" stroke-width="1" />
<line x1="690.1" y1="303.9" x2="686.0" y2="294.9" stroke="#000" stroke-width="1" />
<polygon points="685.9,255.4 953.2,331.2 953.2,311.2 685.9,235.4" fill="#b4943c" stroke="#000" stroke-width="1" />
<polygon points="685.9,235.4 953.2,311.2 968.6,310.1 683.1,229.2" fill="#f6dc7c" stroke="#000" stroke-width="1" />
<polygon points="443.5,393.0 452.4,395.5 452.4,375.5 443.5,373.0" fill="#b4943c" stroke="#000" stroke-width="1" />
<polygon points="452.4,395.5 685.9,255.4 685.9,235.4 452.4,375.5" fill="#e8c868" stroke="#000" stroke-width="1" />
<polygon points="443.5,373.0 452.4,375.5 685.9,235.4 683.1,229.2" fill="#f6dc7c" stroke="#000" stroke-width="1" />
<line x1="685.9" y1="235.4" x2="683.1" y2="229.2" stroke="#000" stroke-width="1" />
<polygon points="718.8,255.8 728.5,258.5 728.5,242.0 718.8,239.3" fill="#b8983c" stroke="#000" stroke-width="1" />
<polygon points="728.5,258.5 731.6,256.7 731.6,240.2 728.5,242.0" fill="#ecd070" stroke="#000" stroke-width="1" />
<polygon points="718.8,239.3 728.5,242.0 731.6,240.2 721.9,237.4" fill="#f6dc7c" stroke="#000" stroke-width="1" />
<polygon points="764.6,268.7 774.3,271.5 774.3,255.0 764.6,252.2" fill="#b8983c" stroke="#000" stroke-width="1" />
<polygon points="774.3,271.5 777.4,269.6 777.4,253.1 774.3,255.0" fill="#ecd070" stroke="#000" stroke-width="1" />
<polygon points="764.6,252.2 774.3,255.0 777.4,253.1 767.7,250.4" fill="#f6dc7c" stroke="#000" stroke-width="1" />
<polygon points="718.8,196.0 728.5,198.7 728.5,182.2 718.8,179.5" fill="#b8983c" stroke="#000" stroke-width="1" />
<polygon points="728.5,198.7 731.6,196.9 731.6,180.4 728.5,182.2" fill="#ecd070" stroke="#000" stroke-width="1" />
<polygon points="718.8,179.5 728.5,182.2 731.6,180.4 721.9,177.6" fill="#f6dc7c" stroke="#000" stroke-width="1" />
<polygon points="764.6,208.9 774.3,211.7 774.3,195.2 764.6,192.4" fill="#b8983c" stroke="#000" stroke-width="1" />
<polygon points="774.3,211.7 777.4,209.8 777.4,193.3 774.3,195.2" fill="#ecd070" stroke="#000" stroke-width="1" />
<polygon points="764.6,192.4 774.3,195.2 777.4,193.3 767.7,190.6" fill="#f6dc7c" stroke="#000" stroke-width="1" />
<polygon points="718.5,255.7 774.6,271.6 774.6,193.8 718.5,177.9" fill="url(#glass)"/>
<line x1="718.5" y1="177.9" x2="774.6" y2="193.8" stroke="#000" stroke-width="1.5" />
<line x1="718.5" y1="255.7" x2="774.6" y2="271.6" stroke="#000" stroke-width="1" stroke-dasharray="1 1"/>
<line x1="718.5" y1="255.7" x2="718.5" y2="177.9" stroke="#000" stroke-width="1" stroke-dasharray="1 1"/>
<line x1="774.6" y1="271.6" x2="774.6" y2="193.8" stroke="#000" stroke-width="1" stroke-dasharray="1 1"/>
<line x1="737.8" y1="212.4" x2="755.4" y2="237.0" stroke="#f00" stroke-width="1" stroke-dasharray="4 1.5"/>
<line x1="746.0" y1="225.0" x2="750.5" y2="222.5" stroke="#f00" stroke-width="1" />
<line x1="737.2" y1="231.9" x2="740.1" y2="230.3" stroke="#f00" stroke-width="1" />
<polygon points="709.5,253.1 718.8,255.8 718.8,239.3 709.5,236.6" fill="#a88a36" stroke="#000" stroke-width="1" />
<polygon points="774.3,271.5 783.6,274.1 783.6,257.6 774.3,255.0" fill="#a88a36" stroke="#000" stroke-width="1" />
<polygon points="715.8,257.6 725.5,260.4 725.5,243.9 715.8,241.1" fill="#b8983c" stroke="#000" stroke-width="1" />
<polygon points="725.5,260.4 728.5,258.5 728.5,242.0 725.5,243.9" fill="#ecd070" stroke="#000" stroke-width="1" />
<polygon points="715.8,241.1 725.5,243.9 728.5,242.0 718.8,239.3" fill="#f6dc7c" stroke="#000" stroke-width="1" />
<rect x="723.1" y="251.9" width="2.4" height="2.4" fill="#000"/>
<polygon points="761.5,270.6 771.2,273.4 771.2,256.9 761.5,254.1" fill="#b8983c" stroke="#000" stroke-width="1" />
<polygon points="771.2,273.4 774.3,271.5 774.3,255.0 771.2,256.9" fill="#ecd070" stroke="#000" stroke-width="1" />
<polygon points="761.5,254.1 771.2,256.9 774.3,255.0 764.6,252.2" fill="#f6dc7c" stroke="#000" stroke-width="1" />
<rect x="761.5" y="262.2" width="2.4" height="2.4" fill="#000"/>
<polygon points="709.5,193.3 718.8,196.0 718.8,179.5 709.5,176.8" fill="#a88a36" stroke="#000" stroke-width="1" />
<polygon points="774.3,211.7 783.6,214.3 783.6,197.8 774.3,195.2" fill="#a88a36" stroke="#000" stroke-width="1" />
<polygon points="715.8,197.8 725.5,200.6 725.5,184.1 715.8,181.3" fill="#b8983c" stroke="#000" stroke-width="1" />
<polygon points="725.5,200.6 728.5,198.7 728.5,182.2 725.5,184.1" fill="#ecd070" stroke="#000" stroke-width="1" />
<polygon points="715.8,181.3 725.5,184.1 728.5,182.2 718.8,179.5" fill="#f6dc7c" stroke="#000" stroke-width="1" />
<rect x="723.1" y="192.1" width="2.4" height="2.4" fill="#000"/>
<polygon points="761.5,210.8 771.2,213.6 771.2,197.1 761.5,194.3" fill="#b8983c" stroke="#000" stroke-width="1" />
<polygon points="771.2,213.6 774.3,211.7 774.3,195.2 771.2,197.1" fill="#ecd070" stroke="#000" stroke-width="1" />
<polygon points="761.5,194.3 771.2,197.1 774.3,195.2 764.6,192.4" fill="#f6dc7c" stroke="#000" stroke-width="1" />
<rect x="761.5" y="202.4" width="2.4" height="2.4" fill="#000"/>
<polygon points="793.0,276.8 802.7,279.5 802.7,263.0 793.0,260.3" fill="#b8983c" stroke="#000" stroke-width="1" />
<polygon points="802.7,279.5 805.7,277.7 805.7,261.2 802.7,263.0" fill="#ecd070" stroke="#000" stroke-width="1" />
<polygon points="793.0,260.3 802.7,263.0 805.7,261.2 796.0,258.4" fill="#f6dc7c" stroke="#000" stroke-width="1" />
<polygon points="838.7,289.8 848.4,292.5 848.4,276.0 838.7,273.3" fill="#b8983c" stroke="#000" stroke-width="1" />
<polygon points="848.4,292.5 851.5,290.7 851.5,274.2 848.4,276.0" fill="#ecd070" stroke="#000" stroke-width="1" />
<polygon points="838.7,273.3 848.4,276.0 851.5,274.2 841.8,271.4" fill="#f6dc7c" stroke="#000" stroke-width="1" />
<polygon points="793.0,217.0 802.7,219.7 802.7,203.2 793.0,200.5" fill="#b8983c" stroke="#000" stroke-width="1" />
<polygon points="802.7,219.7 805.7,217.9 805.7,201.4 802.7,203.2" fill="#ecd070" stroke="#000" stroke-width="1" />
<polygon points="793.0,200.5 802.7,203.2 805.7,201.4 796.0,198.6" fill="#f6dc7c" stroke="#000" stroke-width="1" />
<polygon points="838.7,230.0 848.4,232.7 848.4,216.2 838.7,213.5" fill="#b8983c" stroke="#000" stroke-width="1" />
<polygon points="848.4,232.7 851.5,230.9 851.5,214.4 848.4,216.2" fill="#ecd070" stroke="#000" stroke-width="1" />
<polygon points="838.7,213.5 848.4,216.2 851.5,214.4 841.8,211.6" fill="#f6dc7c" stroke="#000" stroke-width="1" />
<polygon points="792.6,276.7 848.7,292.6 848.7,214.8 792.6,198.9" fill="url(#glass)"/>
<line x1="792.6" y1="198.9" x2="848.7" y2="214.8" stroke="#000" stroke-width="1.5" />
<line x1="792.6" y1="276.7" x2="848.7" y2="292.6" stroke="#000" stroke-width="1" stroke-dasharray="1 1"/>
<line x1="792.6" y1="276.7" x2="792.6" y2="198.9" stroke="#000" stroke-width="1" stroke-dasharray="1 1"/>
<line x1="848.7" y1="292.6" x2="848.7" y2="214.8" stroke="#000" stroke-width="1" stroke-dasharray="1 1"/>
<line x1="811.9" y1="233.5" x2="829.5" y2="258.1" stroke="#f00" stroke-width="1" stroke-dasharray="4 1.5"/>
<line x1="820.1" y1="246.0" x2="824.6" y2="243.5" stroke="#f00" stroke-width="1" />
<line x1="811.3" y1="252.9" x2="814.2" y2="251.3" stroke="#f00" stroke-width="1" />
<polygon points="783.6,274.1 793.0,276.8 793.0,260.3 783.6,257.6" fill="#a88a36" stroke="#000" stroke-width="1" />
<polygon points="848.4,292.5 857.7,295.2 857.7,278.7 848.4,276.0" fill="#a88a36" stroke="#000" stroke-width="1" />
<polygon points="789.9,278.7 799.6,281.4 799.6,264.9 789.9,262.2" fill="#b8983c" stroke="#000" stroke-width="1" />
<polygon points="799.6,281.4 802.7,279.5 802.7,263.0 799.6,264.9" fill="#ecd070" stroke="#000" stroke-width="1" />
<polygon points="789.9,262.2 799.6,264.9 802.7,263.0 793.0,260.3" fill="#f6dc7c" stroke="#000" stroke-width="1" />
<rect x="797.2" y="273.0" width="2.4" height="2.4" fill="#000"/>
<polygon points="835.6,291.6 845.3,294.4 845.3,277.9 835.6,275.1" fill="#b8983c" stroke="#000" stroke-width="1" />
<polygon points="845.3,294.4 848.4,292.5 848.4,276.0 845.3,277.9" fill="#ecd070" stroke="#000" stroke-width="1" />
<polygon points="835.6,275.1 845.3,277.9 848.4,276.0 838.7,273.3" fill="#f6dc7c" stroke="#000" stroke-width="1" />
<rect x="835.6" y="283.2" width="2.4" height="2.4" fill="#000"/>
<polygon points="783.6,214.3 793.0,217.0 793.0,200.5 783.6,197.8" fill="#a88a36" stroke="#000" stroke-width="1" />
<polygon points="848.4,232.7 857.7,235.4 857.7,218.9 848.4,216.2" fill="#a88a36" stroke="#000" stroke-width="1" />
<polygon points="789.9,218.9 799.6,221.6 799.6,205.1 789.9,202.4" fill="#b8983c" stroke="#000" stroke-width="1" />
<polygon points="799.6,221.6 802.7,219.7 802.7,203.2 799.6,205.1" fill="#ecd070" stroke="#000" stroke-width="1" />
<polygon points="789.9,202.4 799.6,205.1 802.7,203.2 793.0,200.5" fill="#f6dc7c" stroke="#000" stroke-width="1" />
<rect x="797.2" y="213.2" width="2.4" height="2.4" fill="#000"/>
<polygon points="835.6,231.8 845.3,234.6 845.3,218.1 835.6,215.3" fill="#b8983c" stroke="#000" stroke-width="1" />
<polygon points="845.3,234.6 848.4,232.7 848.4,216.2 845.3,218.1" fill="#ecd070" stroke="#000" stroke-width="1" />
<polygon points="835.6,215.3 845.3,218.1 848.4,216.2 838.7,213.5" fill="#f6dc7c" stroke="#000" stroke-width="1" />
<rect x="835.6" y="223.4" width="2.4" height="2.4" fill="#000"/>
<polygon points="867.1,297.8 876.8,300.6 876.8,284.1 867.1,281.3" fill="#b8983c" stroke="#000" stroke-width="1" />
<polygon points="876.8,300.6 879.9,298.7 879.9,282.2 876.8,284.1" fill="#ecd070" stroke="#000" stroke-width="1" />
<polygon points="867.1,281.3 876.8,284.1 879.9,282.2 870.2,279.5" fill="#f6dc7c" stroke="#000" stroke-width="1" />
<polygon points="912.8,310.8 922.5,313.5 922.5,297.0 912.8,294.3" fill="#b8983c" stroke="#000" stroke-width="1" />
<polygon points="922.5,313.5 925.6,311.7 925.6,295.2 922.5,297.0" fill="#ecd070" stroke="#000" stroke-width="1" />
<polygon points="912.8,294.3 922.5,297.0 925.6,295.2 915.9,292.4" fill="#f6dc7c" stroke="#000" stroke-width="1" />
<polygon points="867.1,238.0 876.8,240.8 876.8,224.3 867.1,221.5" fill="#b8983c" stroke="#000" stroke-width="1" />
<polygon points="876.8,240.8 879.9,238.9 879.9,222.4 876.8,224.3" fill="#ecd070" stroke="#000" stroke-width="1" />
<polygon points="867.1,221.5 876.8,224.3 879.9,222.4 870.2,219.7" fill="#f6dc7c" stroke="#000" stroke-width="1" />
<polygon points="912.8,251.0 922.5,253.7 922.5,237.2 912.8,234.5" fill="#b8983c" stroke="#000" stroke-width="1" />
<polygon points="922.5,253.7 925.6,251.9 925.6,235.4 922.5,237.2" fill="#ecd070" stroke="#000" stroke-width="1" />
<polygon points="912.8,234.5 922.5,237.2 925.6,235.4 915.9,232.6" fill="#f6dc7c" stroke="#000" stroke-width="1" />
<polygon points="866.7,297.7 922.9,313.6 922.9,235.8 866.7,219.9" fill="url(#glass)"/>
<line x1="866.7" y1="219.9" x2="922.9" y2="235.8" stroke="#000" stroke-width="1.5" />
<line x1="866.7" y1="297.7" x2="922.9" y2="313.6" stroke="#000" stroke-width="1" stroke-dasharray="1 1"/>
<line x1="866.7" y1="297.7" x2="866.7" y2="219.9" stroke="#000" stroke-width="1" stroke-dasharray="1 1"/>
<line x1="922.9" y1="313.6" x2="922.9" y2="235.8" stroke="#000" stroke-width="1" stroke-dasharray="1 1"/>
<line x1="886.0" y1="254.5" x2="903.6" y2="279.1" stroke="#f00" stroke-width="1" stroke-dasharray="4 1.5"/>
<line x1="894.2" y1="267.0" x2="898.7" y2="264.5" stroke="#f00" stroke-width="1" />
<line x1="885.4" y1="273.9" x2="888.3" y2="272.3" stroke="#f00" stroke-width="1" />
<polygon points="857.7,295.2 867.1,297.8 867.1,281.3 857.7,278.7" fill="#a88a36" stroke="#000" stroke-width="1" />
<polygon points="922.5,313.5 931.8,316.2 931.8,299.7 922.5,297.0" fill="#a88a36" stroke="#000" stroke-width="1" />
<polygon points="864.0,299.7 873.7,302.4 873.7,285.9 864.0,283.2" fill="#b8983c" stroke="#000" stroke-width="1" />
<polygon points="873.7,302.4 876.8,300.6 876.8,284.1 873.7,285.9" fill="#ecd070" stroke="#000" stroke-width="1" />
<polygon points="864.0,283.2 873.7,285.9 876.8,284.1 867.1,281.3" fill="#f6dc7c" stroke="#000" stroke-width="1" />
<rect x="871.3" y="294.0" width="2.4" height="2.4" fill="#000"/>
<polygon points="909.7,312.6 919.4,315.4 919.4,298.9 909.7,296.1" fill="#b8983c" stroke="#000" stroke-width="1" />
<polygon points="919.4,315.4 922.5,313.5 922.5,297.0 919.4,298.9" fill="#ecd070" stroke="#000" stroke-width="1" />
<polygon points="909.7,296.1 919.4,298.9 922.5,297.0 912.8,294.3" fill="#f6dc7c" stroke="#000" stroke-width="1" />
<rect x="909.7" y="304.2" width="2.4" height="2.4" fill="#000"/>
<polygon points="857.7,235.4 867.1,238.0 867.1,221.5 857.7,218.9" fill="#a88a36" stroke="#000" stroke-width="1" />
<polygon points="922.5,253.7 931.8,256.4 931.8,239.9 922.5,237.2" fill="#a88a36" stroke="#000" stroke-width="1" />
<polygon points="864.0,239.9 873.7,242.6 873.7,226.1 864.0,223.4" fill="#b8983c" stroke="#000" stroke-width="1" />
<polygon points="873.7,242.6 876.8,240.8 876.8,224.3 873.7,226.1" fill="#ecd070" stroke="#000" stroke-width="1" />
<polygon points="864.0,223.4 873.7,226.1 876.8,224.3 867.1,221.5" fill="#f6dc7c" stroke="#000" stroke-width="1" />
<rect x="871.3" y="234.2" width="2.4" height="2.4" fill="#000"/>
<polygon points="909.7,252.8 919.4,255.6 919.4,239.1 909.7,236.3" fill="#b8983c" stroke="#000" stroke-width="1" />
<polygon points="919.4,255.6 922.5,253.7 922.5,237.2 919.4,239.1" fill="#ecd070" stroke="#000" stroke-width="1" />
<polygon points="909.7,236.3 919.4,239.1 922.5,237.2 912.8,234.5" fill="#f6dc7c" stroke="#000" stroke-width="1" />
<rect x="909.7" y="244.4" width="2.4" height="2.4" fill="#000"/>
<rect x="707.9" y="164.1" width="3.2" height="100.0" fill="#000"/>
<rect x="708.9" y="164.1" width="1.3" height="99.2" fill="#c8a43c"/>
<rect x="782.0" y="185.1" width="3.2" height="100.0" fill="#000"/>
<rect x="783.0" y="185.1" width="1.3" height="99.2" fill="#c8a43c"/>
<rect x="856.1" y="206.2" width="3.2" height="100.0" fill="#000"/>
<rect x="857.1" y="206.2" width="1.3" height="99.2" fill="#c8a43c"/>
<rect x="930.2" y="227.2" width="3.2" height="100.0" fill="#000"/>
<rect x="931.2" y="227.2" width="1.3" height="99.2" fill="#c8a43c"/>
<polygon points="653.8,261.7 658.3,263.0 658.3,246.5 653.8,245.2" fill="#b4943c" stroke="#000" stroke-width="1" />
<polygon points="658.3,263.0 665.0,259.0 665.0,242.5 658.3,246.5" fill="#e8c868" stroke="#000" stroke-width="1" />
<polygon points="653.8,245.2 658.3,246.5 665.0,242.5 660.5,241.2" fill="#f6dc7c" stroke="#000" stroke-width="1" />
<polygon points="618.3,283.0 622.8,284.3 622.8,267.8 618.3,266.5" fill="#b4943c" stroke="#000" stroke-width="1" />
<polygon points="622.8,284.3 629.5,280.3 629.5,263.8 622.8,267.8" fill="#e8c868" stroke="#000" stroke-width="1" />
<polygon points="618.3,266.5 622.8,267.8 629.5,263.8 625.0,262.5" fill="#f6dc7c" stroke="#000" stroke-width="1" />
<polygon points="653.8,201.9 658.3,203.2 658.3,186.7 653.8,185.4" fill="#b4943c" stroke="#000" stroke-width="1" />
<polygon points="658.3,203.2 665.0,199.2 665.0,182.7 658.3,186.7" fill="#e8c868" stroke="#000" stroke-width="1" />
<polygon points="653.8,185.4 658.3,186.7 665.0,182.7 660.5,181.4" fill="#f6dc7c" stroke="#000" stroke-width="1" />
<polygon points="618.3,223.2 622.8,224.5 622.8,208.0 618.3,206.7" fill="#b4943c" stroke="#000" stroke-width="1" />
<polygon points="622.8,224.5 629.5,220.5 629.5,204.0 622.8,208.0" fill="#e8c868" stroke="#000" stroke-width="1" />
<polygon points="618.3,206.7 622.8,208.0 629.5,204.0 625.0,202.7" fill="#f6dc7c" stroke="#000" stroke-width="1" />
<polygon points="665.0,259.0 671.4,255.1 671.4,238.6 665.0,242.5" fill="#ecca66" stroke="#000" stroke-width="1" />
<polygon points="665.0,199.2 671.4,195.3 671.4,178.8 665.0,182.7" fill="#ecca66" stroke="#000" stroke-width="1" />
<polygon points="622.6,284.4 665.2,258.8 665.2,181.0 622.6,206.6" fill="url(#glass)"/>
<line x1="622.6" y1="206.6" x2="665.2" y2="181.0" stroke="#000" stroke-width="1.5" />
<line x1="622.6" y1="284.4" x2="665.2" y2="258.8" stroke="#000" stroke-width="1" stroke-dasharray="1 1"/>
<line x1="622.6" y1="284.4" x2="622.6" y2="206.6" stroke="#000" stroke-width="1" stroke-dasharray="1 1"/>
<line x1="665.2" y1="258.8" x2="665.2" y2="181.0" stroke="#000" stroke-width="1" stroke-dasharray="1 1"/>
<line x1="638.1" y1="226.8" x2="649.7" y2="238.6" stroke="#f00" stroke-width="1" />
<line x1="645.3" y1="231.1" x2="646.9" y2="227.9" stroke="#f00" stroke-width="1" />
<line x1="637.5" y1="246.6" x2="639.8" y2="242.4" stroke="#f00" stroke-width="1" />
<polygon points="616.4,288.1 622.8,284.3 622.8,267.8 616.4,271.6" fill="#ecca66" stroke="#000" stroke-width="1" />
<line x1="622.6" y1="284.4" x2="622.6" y2="267.9" stroke="#000" stroke-width="1.6" />
<polygon points="616.4,228.3 622.8,224.5 622.8,208.0 616.4,211.8" fill="#ecca66" stroke="#000" stroke-width="1" />
<line x1="622.6" y1="224.6" x2="622.6" y2="208.1" stroke="#000" stroke-width="1.6" />
<polygon points="658.3,263.0 662.8,264.3 662.8,247.8 658.3,246.5" fill="#b4943c" stroke="#000" stroke-width="1" />
<polygon points="662.8,264.3 669.5,260.3 669.5,243.8 662.8,247.8" fill="#e8c868" stroke="#000" stroke-width="1" />
<polygon points="658.3,246.5 662.8,247.8 669.5,243.8 665.0,242.5" fill="#f6dc7c" stroke="#000" stroke-width="1" />
<rect x="662.8" y="255.8" width="2.2" height="2.4" fill="#000"/>
<polygon points="622.8,284.3 627.3,285.5 627.3,269.0 622.8,267.8" fill="#b4943c" stroke="#000" stroke-width="1" />
<polygon points="627.3,285.5 634.0,281.5 634.0,265.0 627.3,269.0" fill="#e8c868" stroke="#000" stroke-width="1" />
<polygon points="622.8,267.8 627.3,269.0 634.0,265.0 629.5,263.8" fill="#f6dc7c" stroke="#000" stroke-width="1" />
<rect x="631.8" y="273.1" width="2.2" height="2.4" fill="#000"/>
<polygon points="658.3,203.2 662.8,204.5 662.8,188.0 658.3,186.7" fill="#b4943c" stroke="#000" stroke-width="1" />
<polygon points="662.8,204.5 669.5,200.5 669.5,184.0 662.8,188.0" fill="#e8c868" stroke="#000" stroke-width="1" />
<polygon points="658.3,186.7 662.8,188.0 669.5,184.0 665.0,182.7" fill="#f6dc7c" stroke="#000" stroke-width="1" />
<rect x="662.8" y="196.0" width="2.2" height="2.4" fill="#000"/>
<polygon points="622.8,224.5 627.3,225.7 627.3,209.2 622.8,208.0" fill="#b4943c" stroke="#000" stroke-width="1" />
<polygon points="627.3,225.7 634.0,221.7 634.0,205.2 627.3,209.2" fill="#e8c868" stroke="#000" stroke-width="1" />
<polygon points="622.8,208.0 627.3,209.2 634.0,205.2 629.5,204.0" fill="#f6dc7c" stroke="#000" stroke-width="1" />
<rect x="631.8" y="213.3" width="2.2" height="2.4" fill="#000"/>
<rect x="669.8" y="166.1" width="3.2" height="100.0" fill="#000"/>
<rect x="670.8" y="166.1" width="1.3" height="99.2" fill="#c8a43c"/>
<polygon points="598.8,294.7 603.3,296.0 603.3,279.5 598.8,278.2" fill="#b4943c" stroke="#000" stroke-width="1" />
<polygon points="603.3,296.0 610.0,292.0 610.0,275.5 603.3,279.5" fill="#e8c868" stroke="#000" stroke-width="1" />
<polygon points="598.8,278.2 603.3,279.5 610.0,275.5 605.5,274.2" fill="#f6dc7c" stroke="#000" stroke-width="1" />
<polygon points="563.3,316.0 567.8,317.3 567.8,300.8 563.3,299.5" fill="#b4943c" stroke="#000" stroke-width="1" />
<polygon points="567.8,317.3 574.5,313.3 574.5,296.8 567.8,300.8" fill="#e8c868" stroke="#000" stroke-width="1" />
<polygon points="563.3,299.5 567.8,300.8 574.5,296.8 570.0,295.5" fill="#f6dc7c" stroke="#000" stroke-width="1" />
<polygon points="598.8,234.9 603.3,236.2 603.3,219.7 598.8,218.4" fill="#b4943c" stroke="#000" stroke-width="1" />
<polygon points="603.3,236.2 610.0,232.2 610.0,215.7 603.3,219.7" fill="#e8c868" stroke="#000" stroke-width="1" />
<polygon points="598.8,218.4 603.3,219.7 610.0,215.7 605.5,214.4" fill="#f6dc7c" stroke="#000" stroke-width="1" />
<polygon points="563.3,256.2 567.8,257.5 567.8,241.0 563.3,239.7" fill="#b4943c" stroke="#000" stroke-width="1" />
<polygon points="567.8,257.5 574.5,253.5 574.5,237.0 567.8,241.0" fill="#e8c868" stroke="#000" stroke-width="1" />
<polygon points="563.3,239.7 567.8,241.0 574.5,237.0 570.0,235.7" fill="#f6dc7c" stroke="#000" stroke-width="1" />
<polygon points="610.0,292.0 616.4,288.1 616.4,271.6 610.0,275.5" fill="#ecca66" stroke="#000" stroke-width="1" />
<polygon points="610.0,232.2 616.4,228.3 616.4,211.8 610.0,215.7" fill="#ecca66" stroke="#000" stroke-width="1" />
<polygon points="567.6,317.4 610.2,291.8 610.2,214.0 567.6,239.6" fill="url(#glass)"/>
<line x1="567.6" y1="239.6" x2="610.2" y2="214.0" stroke="#000" stroke-width="1.5" />
<line x1="567.6" y1="317.4" x2="610.2" y2="291.8" stroke="#000" stroke-width="1" stroke-dasharray="1 1"/>
<line x1="567.6" y1="317.4" x2="567.6" y2="239.6" stroke="#000" stroke-width="1" stroke-dasharray="1 1"/>
<line x1="610.2" y1="291.8" x2="610.2" y2="214.0" stroke="#000" stroke-width="1" stroke-dasharray="1 1"/>
<line x1="583.1" y1="259.8" x2="594.7" y2="271.6" stroke="#f00" stroke-width="1" />
<line x1="590.3" y1="264.1" x2="591.9" y2="260.9" stroke="#f00" stroke-width="1" />
<line x1="582.5" y1="279.6" x2="584.8" y2="275.4" stroke="#f00" stroke-width="1" />
<polygon points="561.4,321.1 567.8,317.3 567.8,300.8 561.4,304.6" fill="#ecca66" stroke="#000" stroke-width="1" />
<line x1="567.6" y1="317.4" x2="567.6" y2="300.9" stroke="#000" stroke-width="1.6" />
<polygon points="561.4,261.3 567.8,257.5 567.8,241.0 561.4,244.8" fill="#ecca66" stroke="#000" stroke-width="1" />
<line x1="567.6" y1="257.6" x2="567.6" y2="241.1" stroke="#000" stroke-width="1.6" />
<polygon points="603.3,296.0 607.8,297.3 607.8,280.8 603.3,279.5" fill="#b4943c" stroke="#000" stroke-width="1" />
<polygon points="607.8,297.3 614.5,293.3 614.5,276.8 607.8,280.8" fill="#e8c868" stroke="#000" stroke-width="1" />
<polygon points="603.3,279.5 607.8,280.8 614.5,276.8 610.0,275.5" fill="#f6dc7c" stroke="#000" stroke-width="1" />
<rect x="607.8" y="288.8" width="2.2" height="2.4" fill="#000"/>
<polygon points="567.8,317.3 572.3,318.5 572.3,302.0 567.8,300.8" fill="#b4943c" stroke="#000" stroke-width="1" />
<polygon points="572.3,318.5 579.0,314.5 579.0,298.0 572.3,302.0" fill="#e8c868" stroke="#000" stroke-width="1" />
<polygon points="567.8,300.8 572.3,302.0 579.0,298.0 574.5,296.8" fill="#f6dc7c" stroke="#000" stroke-width="1" />
<rect x="576.8" y="306.1" width="2.2" height="2.4" fill="#000"/>
<polygon points="603.3,236.2 607.8,237.5 607.8,221.0 603.3,219.7" fill="#b4943c" stroke="#000" stroke-width="1" />
<polygon points="607.8,237.5 614.5,233.5 614.5,217.0 607.8,221.0" fill="#e8c868" stroke="#000" stroke-width="1" />
<polygon points="603.3,219.7 607.8,221.0 614.5,217.0 610.0,215.7" fill="#f6dc7c" stroke="#000" stroke-width="1" />
<rect x="607.8" y="229.0" width="2.2" height="2.4" fill="#000"/>
<polygon points="567.8,257.5 572.3,258.7 572.3,242.2 567.8,241.0" fill="#b4943c" stroke="#000" stroke-width="1" />
<polygon points="572.3,258.7 579.0,254.7 579.0,238.2 572.3,242.2" fill="#e8c868" stroke="#000" stroke-width="1" />
<polygon points="567.8,241.0 572.3,242.2 579.0,238.2 574.5,237.0" fill="#f6dc7c" stroke="#000" stroke-width="1" />
<rect x="576.8" y="246.3" width="2.2" height="2.4" fill="#000"/>
<rect x="614.8" y="199.1" width="3.2" height="100.0" fill="#000"/>
<rect x="615.8" y="199.1" width="1.3" height="99.2" fill="#c8a43c"/>
<polygon points="543.8,327.7 548.3,329.0 548.3,312.5 543.8,311.2" fill="#b4943c" stroke="#000" stroke-width="1" />
<polygon points="548.3,329.0 555.0,325.0 555.0,308.5 548.3,312.5" fill="#e8c868" stroke="#000" stroke-width="1" />
<polygon points="543.8,311.2 548.3,312.5 555.0,308.5 550.5,307.2" fill="#f6dc7c" stroke="#000" stroke-width="1" />
<polygon points="508.3,349.0 512.8,350.3 512.8,333.8 508.3,332.5" fill="#b4943c" stroke="#000" stroke-width="1" />
<polygon points="512.8,350.3 519.5,346.3 519.5,329.8 512.8,333.8" fill="#e8c868" stroke="#000" stroke-width="1" />
<polygon points="508.3,332.5 512.8,333.8 519.5,329.8 515.0,328.5" fill="#f6dc7c" stroke="#000" stroke-width="1" />
<polygon points="543.8,267.9 548.3,269.2 548.3,252.7 543.8,251.4" fill="#b4943c" stroke="#000" stroke-width="1" />
<polygon points="548.3,269.2 555.0,265.2 555.0,248.7 548.3,252.7" fill="#e8c868" stroke="#000" stroke-width="1" />
<polygon points="543.8,251.4 548.3,252.7 555.0,248.7 550.5,247.4" fill="#f6dc7c" stroke="#000" stroke-width="1" />
<polygon points="508.3,289.2 512.8,290.5 512.8,274.0 508.3,272.7" fill="#b4943c" stroke="#000" stroke-width="1" />
<polygon points="512.8,290.5 519.5,286.5 519.5,270.0 512.8,274.0" fill="#e8c868" stroke="#000" stroke-width="1" />
<polygon points="508.3,272.7 512.8,274.0 519.5,270.0 515.0,268.7" fill="#f6dc7c" stroke="#000" stroke-width="1" />
<polygon points="555.0,325.0 561.4,321.1 561.4,304.6 555.0,308.5" fill="#ecca66" stroke="#000" stroke-width="1" />
<polygon points="555.0,265.2 561.4,261.3 561.4,244.8 555.0,248.7" fill="#ecca66" stroke="#000" stroke-width="1" />
<polygon points="512.6,350.4 555.2,324.8 555.2,247.0 512.6,272.6" fill="url(#glass)"/>
<line x1="512.6" y1="272.6" x2="555.2" y2="247.0" stroke="#000" stroke-width="1.5" />
<line x1="512.6" y1="350.4" x2="555.2" y2="324.8" stroke="#000" stroke-width="1" stroke-dasharray="1 1"/>
<line x1="512.6" y1="350.4" x2="512.6" y2="272.6" stroke="#000" stroke-width="1" stroke-dasharray="1 1"/>
<line x1="555.2" y1="324.8" x2="555.2" y2="247.0" stroke="#000" stroke-width="1" stroke-dasharray="1 1"/>
<line x1="528.1" y1="292.8" x2="539.7" y2="304.6" stroke="#f00" stroke-width="1" />
<line x1="535.3" y1="297.1" x2="536.9" y2="293.9" stroke="#f00" stroke-width="1" />
<line x1="527.5" y1="312.6" x2="529.8" y2="308.4" stroke="#f00" stroke-width="1" />
<polygon points="506.4,354.1 512.8,350.3 512.8,333.8 506.4,337.6" fill="#ecca66" stroke="#000" stroke-width="1" />
<line x1="512.6" y1="350.4" x2="512.6" y2="333.9" stroke="#000" stroke-width="1.6" />
<polygon points="506.4,294.3 512.8,290.5 512.8,274.0 506.4,277.8" fill="#ecca66" stroke="#000" stroke-width="1" />
<line x1="512.6" y1="290.6" x2="512.6" y2="274.1" stroke="#000" stroke-width="1.6" />
<polygon points="548.3,329.0 552.8,330.3 552.8,313.8 548.3,312.5" fill="#b4943c" stroke="#000" stroke-width="1" />
<polygon points="552.8,330.3 559.5,326.2 559.5,309.7 552.8,313.8" fill="#e8c868" stroke="#000" stroke-width="1" />
<polygon points="548.3,312.5 552.8,313.8 559.5,309.7 555.0,308.5" fill="#f6dc7c" stroke="#000" stroke-width="1" />
<rect x="552.8" y="321.8" width="2.2" height="2.4" fill="#000"/>
<polygon points="512.8,350.3 517.3,351.5 517.3,335.0 512.8,333.8" fill="#b4943c" stroke="#000" stroke-width="1" />
<polygon points="517.3,351.5 524.0,347.5 524.0,331.0 517.3,335.0" fill="#e8c868" stroke="#000" stroke-width="1" />
<polygon points="512.8,333.8 517.3,335.0 524.0,331.0 519.5,329.8" fill="#f6dc7c" stroke="#000" stroke-width="1" />
<rect x="521.8" y="339.1" width="2.2" height="2.4" fill="#000"/>
<polygon points="548.3,269.2 552.8,270.5 552.8,254.0 548.3,252.7" fill="#b4943c" stroke="#000" stroke-width="1" />
<polygon points="552.8,270.5 559.5,266.4 559.5,249.9 552.8,254.0" fill="#e8c868" stroke="#000" stroke-width="1" />
<polygon points="548.3,252.7 552.8,254.0 559.5,249.9 555.0,248.7" fill="#f6dc7c" stroke="#000" stroke-width="1" />
<rect x="552.8" y="262.0" width="2.2" height="2.4" fill="#000"/>
<polygon points="512.8,290.5 517.3,291.7 517.3,275.2 512.8,274.0" fill="#b4943c" stroke="#000" stroke-width="1" />
<polygon points="517.3,291.7 524.0,287.7 524.0,271.2 517.3,275.2" fill="#e8c868" stroke="#000" stroke-width="1" />
<polygon points="512.8,274.0 517.3,275.2 524.0,271.2 519.5,270.0" fill="#f6dc7c" stroke="#000" stroke-width="1" />
<rect x="521.8" y="279.3" width="2.2" height="2.4" fill="#000"/>
<rect x="559.8" y="232.1" width="3.2" height="100.0" fill="#000"/>
<rect x="560.8" y="232.1" width="1.3" height="99.2" fill="#c8a43c"/>
<polygon points="488.8,360.7 493.3,362.0 493.3,345.5 488.8,344.2" fill="#b4943c" stroke="#000" stroke-width="1" />
<polygon points="493.3,362.0 500.0,358.0 500.0,341.5 493.3,345.5" fill="#e8c868" stroke="#000" stroke-width="1" />
<polygon points="488.8,344.2 493.3,345.5 500.0,341.5 495.5,340.2" fill="#f6dc7c" stroke="#000" stroke-width="1" />
<polygon points="453.3,382.0 457.8,383.3 457.8,366.8 453.3,365.5" fill="#b4943c" stroke="#000" stroke-width="1" />
<polygon points="457.8,383.3 464.5,379.3 464.5,362.8 457.8,366.8" fill="#e8c868" stroke="#000" stroke-width="1" />
<polygon points="453.3,365.5 457.8,366.8 464.5,362.8 460.0,361.5" fill="#f6dc7c" stroke="#000" stroke-width="1" />
<polygon points="488.8,300.9 493.3,302.2 493.3,285.7 488.8,284.4" fill="#b4943c" stroke="#000" stroke-width="1" />
<polygon points="493.3,302.2 500.0,298.2 500.0,281.7 493.3,285.7" fill="#e8c868" stroke="#000" stroke-width="1" />
<polygon points="488.8,284.4 493.3,285.7 500.0,281.7 495.5,280.4" fill="#f6dc7c" stroke="#000" stroke-width="1" />
<polygon points="453.3,322.2 457.8,323.5 457.8,307.0 453.3,305.7" fill="#b4943c" stroke="#000" stroke-width="1" />
<polygon points="457.8,323.5 464.5,319.5 464.5,303.0 457.8,307.0" fill="#e8c868" stroke="#000" stroke-width="1" />
<polygon points="453.3,305.7 457.8,307.0 464.5,303.0 460.0,301.7" fill="#f6dc7c" stroke="#000" stroke-width="1" />
<polygon points="500.0,358.0 506.4,354.1 506.4,337.6 500.0,341.5" fill="#ecca66" stroke="#000" stroke-width="1" />
<polygon points="500.0,298.2 506.4,294.3 506.4,277.8 500.0,281.7" fill="#ecca66" stroke="#000" stroke-width="1" />
<polygon points="457.6,383.4 500.2,357.8 500.2,280.0 457.6,305.6" fill="url(#glass)"/>
<line x1="457.6" y1="305.6" x2="500.2" y2="280.0" stroke="#000" stroke-width="1.5" />
<line x1="457.6" y1="383.4" x2="500.2" y2="357.8" stroke="#000" stroke-width="1" stroke-dasharray="1 1"/>
<line x1="457.6" y1="383.4" x2="457.6" y2="305.6" stroke="#000" stroke-width="1" stroke-dasharray="1 1"/>
<line x1="500.2" y1="357.8" x2="500.2" y2="280.0" stroke="#000" stroke-width="1" stroke-dasharray="1 1"/>
<line x1="473.1" y1="325.8" x2="484.7" y2="337.6" stroke="#f00" stroke-width="1" />
<line x1="480.3" y1="330.1" x2="481.9" y2="326.9" stroke="#f00" stroke-width="1" />
<line x1="472.5" y1="345.6" x2="474.8" y2="341.4" stroke="#f00" stroke-width="1" />
<polygon points="451.4,387.1 457.8,383.3 457.8,366.8 451.4,370.6" fill="#ecca66" stroke="#000" stroke-width="1" />
<line x1="457.6" y1="383.4" x2="457.6" y2="366.9" stroke="#000" stroke-width="1.6" />
<polygon points="451.4,327.3 457.8,323.5 457.8,307.0 451.4,310.8" fill="#ecca66" stroke="#000" stroke-width="1" />
<line x1="457.6" y1="323.6" x2="457.6" y2="307.1" stroke="#000" stroke-width="1.6" />
<polygon points="493.3,362.0 497.8,363.2 497.8,346.7 493.3,345.5" fill="#b4943c" stroke="#000" stroke-width="1" />
<polygon points="497.8,363.2 504.5,359.2 504.5,342.7 497.8,346.7" fill="#e8c868" stroke="#000" stroke-width="1" />
<polygon points="493.3,345.5 497.8,346.7 504.5,342.7 500.0,341.5" fill="#f6dc7c" stroke="#000" stroke-width="1" />
<rect x="497.8" y="354.8" width="2.2" height="2.4" fill="#000"/>
<polygon points="457.8,383.3 462.3,384.5 462.3,368.0 457.8,366.8" fill="#b4943c" stroke="#000" stroke-width="1" />
<polygon points="462.3,384.5 469.0,380.5 469.0,364.0 462.3,368.0" fill="#e8c868" stroke="#000" stroke-width="1" />
<polygon points="457.8,366.8 462.3,368.0 469.0,364.0 464.5,362.8" fill="#f6dc7c" stroke="#000" stroke-width="1" />
<rect x="466.8" y="372.1" width="2.2" height="2.4" fill="#000"/>
<polygon points="493.3,302.2 497.8,303.4 497.8,286.9 493.3,285.7" fill="#b4943c" stroke="#000" stroke-width="1" />
<polygon points="497.8,303.4 504.5,299.4 504.5,282.9 497.8,286.9" fill="#e8c868" stroke="#000" stroke-width="1" />
<polygon points="493.3,285.7 497.8,286.9 504.5,282.9 500.0,281.7" fill="#f6dc7c" stroke="#000" stroke-width="1" />
<rect x="497.8" y="295.0" width="2.2" height="2.4" fill="#000"/>
<polygon points="457.8,323.5 462.3,324.7 462.3,308.2 457.8,307.0" fill="#b4943c" stroke="#000" stroke-width="1" />
<polygon points="462.3,324.7 469.0,320.7 469.0,304.2 462.3,308.2" fill="#e8c868" stroke="#000" stroke-width="1" />
<polygon points="457.8,307.0 462.3,308.2 469.0,304.2 464.5,303.0" fill="#f6dc7c" stroke="#000" stroke-width="1" />
<rect x="466.8" y="312.3" width="2.2" height="2.4" fill="#000"/>
<rect x="504.8" y="265.1" width="3.2" height="100.0" fill="#000"/>
<rect x="505.8" y="265.1" width="1.3" height="99.2" fill="#c8a43c"/>
<rect x="449.8" y="298.1" width="3.2" height="100.0" fill="#000"/>
<rect x="450.8" y="298.1" width="1.3" height="99.2" fill="#c8a43c"/>
<line x1="444.7" y1="302.7" x2="685.9" y2="157.9" stroke="#000" stroke-width="3.0" stroke-linecap="square"/>
<line x1="444.7" y1="302.7" x2="685.9" y2="157.9" stroke="#e6c455" stroke-width="1.0"/>
<line x1="685.9" y1="157.9" x2="955.4" y2="234.3" stroke="#000" stroke-width="3.0" stroke-linecap="square"/>
<line x1="685.9" y1="157.9" x2="955.4" y2="234.3" stroke="#e6c455" stroke-width="1.0"/>
<polygon points="682.5,535.1 695.5,538.8 978.1,369.2 956.2,370.9" fill="url(#stTop)" stroke="#000" stroke-width="1" />
<polygon points="695.5,540.7 978.1,371.1 978.1,369.2 695.5,538.8" fill="#a8a8a8" stroke="#000" stroke-width="1" />
<polygon points="668.5,533.0 695.5,540.7 695.5,538.8 668.5,531.1" fill="#a8a8a8" stroke="#000" stroke-width="1" />
<polygon points="668.5,531.1 681.5,534.8 681.5,523.4" fill="url(#stTop)" stroke="#000" stroke-width="1" />
<polygon points="682.5,535.1 956.2,370.9 956.2,335.7 682.5,499.9" fill="url(#stB)" stroke="#000" stroke-width="1" />
<polygon points="681.5,534.8 682.5,535.1 682.5,499.9 681.5,499.6" fill="#000" stroke="#000" stroke-width="1" />
<line x1="686.9" y1="514.8" x2="707.0" y2="502.8" stroke="#f00" stroke-width="1" />
<line x1="714.2" y1="498.5" x2="715.5" y2="497.7" stroke="#f00" stroke-width="1" />
<line x1="723.8" y1="492.7" x2="743.9" y2="480.7" stroke="#f00" stroke-width="1" />
<line x1="751.1" y1="476.3" x2="752.3" y2="475.6" stroke="#f00" stroke-width="1" />
<line x1="760.7" y1="470.6" x2="780.7" y2="458.6" stroke="#f00" stroke-width="1" />
<line x1="788.0" y1="454.2" x2="789.2" y2="453.5" stroke="#f00" stroke-width="1" />
<line x1="797.5" y1="448.5" x2="817.6" y2="436.4" stroke="#f00" stroke-width="1" />
<line x1="824.8" y1="432.1" x2="826.1" y2="431.4" stroke="#f00" stroke-width="1" />
<line x1="834.4" y1="426.4" x2="854.5" y2="414.3" stroke="#f00" stroke-width="1" />
<line x1="861.7" y1="410.0" x2="862.9" y2="409.2" stroke="#f00" stroke-width="1" />
<line x1="871.3" y1="404.2" x2="891.3" y2="392.2" stroke="#f00" stroke-width="1" />
<line x1="898.6" y1="387.9" x2="899.8" y2="387.1" stroke="#f00" stroke-width="1" />
<line x1="908.1" y1="382.1" x2="928.2" y2="370.1" stroke="#f00" stroke-width="1" />
<line x1="935.4" y1="365.8" x2="936.7" y2="365.0" stroke="#f00" stroke-width="1" />
<line x1="945.0" y1="360.0" x2="955.9" y2="353.5" stroke="#f00" stroke-width="1" />
<polygon points="695.5,503.6 978.1,334.0 978.1,332.1 695.5,501.7" fill="#a8a8a8" stroke="#000" stroke-width="1" />
<polygon points="668.5,495.9 695.5,503.6 695.5,501.7 668.5,494.0" fill="#a8a8a8" stroke="#000" stroke-width="1" />
<polygon points="668.5,494.0 695.5,501.7 978.1,332.1 932.6,335.6" fill="url(#stTop)" stroke="#000" stroke-width="1" />
<line x1="956.2" y1="370.9" x2="978.1" y2="369.2" stroke="#000" stroke-width="1" />
<line x1="952.5" y1="355.5" x2="956.9" y2="352.9" stroke="#f00" stroke-width="1" />
<line x1="955.5" y1="353.4" x2="963.9" y2="348.4" stroke="#f00" stroke-width="1" />
<line x1="955.5" y1="353.4" x2="965.4" y2="356.2" stroke="#f00" stroke-width="1" />
<polygon points="700.0,483.1 709.3,485.7 709.3,465.7 700.0,463.1" fill="#b4943c" stroke="#000" stroke-width="1" />
<polygon points="709.3,485.7 968.6,330.1 968.6,310.1 709.3,465.7" fill="#e8c868" stroke="#000" stroke-width="1" />
<polygon points="928.2,326.2 937.4,328.8 968.6,310.1 953.2,311.2" fill="#f6dc7c" stroke="#000" stroke-width="1" />
<polygon points="704.5,464.3 709.3,465.7 938.3,328.3 933.5,327.0" fill="#f6dc7c" />
<line x1="709.3" y1="465.7" x2="938.3" y2="328.3" stroke="#000" stroke-width="1" />
<line x1="704.5" y1="464.3" x2="709.3" y2="465.7" stroke="#000" stroke-width="1" />
<line x1="953.2" y1="311.2" x2="968.6" y2="310.1" stroke="#000" stroke-width="1" />
<polygon points="921.3,330.3 925.8,331.6 925.8,324.1 921.3,322.8" fill="#b4943c" stroke="#000" stroke-width="1" />
<polygon points="925.8,331.6 932.5,327.6 932.5,320.1 925.8,324.1" fill="#e8c868" stroke="#000" stroke-width="1" />
<polygon points="921.3,322.8 925.8,324.1 932.5,320.1 928.0,318.8" fill="#f6dc7c" stroke="#000" stroke-width="1" />
<polygon points="881.2,354.4 885.7,355.6 885.7,348.1 881.2,346.9" fill="#b4943c" stroke="#000" stroke-width="1" />
<polygon points="885.7,355.6 892.4,351.6 892.4,344.1 885.7,348.1" fill="#e8c868" stroke="#000" stroke-width="1" />
<polygon points="881.2,346.9 885.7,348.1 892.4,344.1 887.9,342.9" fill="#f6dc7c" stroke="#000" stroke-width="1" />
<polygon points="921.3,279.5 925.8,280.8 925.8,264.3 921.3,263.0" fill="#b4943c" stroke="#000" stroke-width="1" />
<polygon points="925.8,280.8 932.5,276.8 932.5,260.3 925.8,264.3" fill="#e8c868" stroke="#000" stroke-width="1" />
<polygon points="921.3,263.0 925.8,264.3 932.5,260.3 928.0,259.0" fill="#f6dc7c" stroke="#000" stroke-width="1" />
<polygon points="881.2,303.6 885.7,304.8 885.7,288.3 881.2,287.1" fill="#b4943c" stroke="#000" stroke-width="1" />
<polygon points="885.7,304.8 892.4,300.8 892.4,284.3 885.7,288.3" fill="#e8c868" stroke="#000" stroke-width="1" />
<polygon points="881.2,287.1 885.7,288.3 892.4,284.3 887.9,283.1" fill="#f6dc7c" stroke="#000" stroke-width="1" />
<polygon points="932.5,327.6 938.9,323.7 938.9,316.2 932.5,320.1" fill="#ecca66" stroke="#000" stroke-width="1" />
<polygon points="932.5,276.8 938.9,272.9 938.9,256.4 932.5,260.3" fill="#ecca66" stroke="#000" stroke-width="1" />
<polygon points="885.5,355.8 932.7,327.4 932.7,258.6 885.5,287.0" fill="url(#glass)"/>
<line x1="885.5" y1="287.0" x2="932.7" y2="258.6" stroke="#000" stroke-width="1.5" />
<line x1="885.5" y1="355.8" x2="932.7" y2="327.4" stroke="#000" stroke-width="1" stroke-dasharray="1 1"/>
<line x1="885.5" y1="355.8" x2="885.5" y2="287.0" stroke="#000" stroke-width="1" />
<line x1="932.7" y1="327.4" x2="932.7" y2="258.6" stroke="#000" stroke-width="1" stroke-dasharray="1 1"/>
<line x1="915.1" y1="298.3" x2="903.0" y2="325.1" stroke="#f00" stroke-width="1" />
<line x1="910.3" y1="315.5" x2="913.2" y2="318.1" stroke="#f00" stroke-width="1" />
<line x1="907.7" y1="310.7" x2="909.2" y2="310.2" stroke="#f00" stroke-width="1" />
<polygon points="879.3,359.5 885.7,355.6 885.7,348.1 879.3,352.0" fill="#ecca66" stroke="#000" stroke-width="1" />
<line x1="885.5" y1="355.8" x2="885.5" y2="348.3" stroke="#000" stroke-width="1.6" />
<polygon points="879.3,308.7 885.7,304.8 885.7,288.3 879.3,292.2" fill="#ecca66" stroke="#000" stroke-width="1" />
<line x1="885.5" y1="305.0" x2="885.5" y2="288.5" stroke="#000" stroke-width="1.6" />
<polygon points="925.8,331.6 930.3,332.9 930.3,325.4 925.8,324.1" fill="#b4943c" stroke="#000" stroke-width="1" />
<polygon points="930.3,332.9 937.0,328.9 937.0,321.4 930.3,325.4" fill="#e8c868" stroke="#000" stroke-width="1" />
<polygon points="925.8,324.1 930.3,325.4 937.0,321.4 932.5,320.1" fill="#f6dc7c" stroke="#000" stroke-width="1" />
<polygon points="885.7,355.6 890.2,356.9 890.2,349.4 885.7,348.1" fill="#b4943c" stroke="#000" stroke-width="1" />
<polygon points="890.2,356.9 896.9,352.9 896.9,345.4 890.2,349.4" fill="#e8c868" stroke="#000" stroke-width="1" />
<polygon points="885.7,348.1 890.2,349.4 896.9,345.4 892.4,344.1" fill="#f6dc7c" stroke="#000" stroke-width="1" />
<polygon points="925.8,280.8 930.3,282.1 930.3,265.6 925.8,264.3" fill="#b4943c" stroke="#000" stroke-width="1" />
<polygon points="930.3,282.1 937.0,278.1 937.0,261.6 930.3,265.6" fill="#e8c868" stroke="#000" stroke-width="1" />
<polygon points="925.8,264.3 930.3,265.6 937.0,261.6 932.5,260.3" fill="#f6dc7c" stroke="#000" stroke-width="1" />
<rect x="930.3" y="273.6" width="2.2" height="2.4" fill="#000"/>
<polygon points="885.7,304.8 890.2,306.1 890.2,289.6 885.7,288.3" fill="#b4943c" stroke="#000" stroke-width="1" />
<polygon points="890.2,306.1 896.9,302.1 896.9,285.6 890.2,289.6" fill="#e8c868" stroke="#000" stroke-width="1" />
<polygon points="885.7,288.3 890.2,289.6 896.9,285.6 892.4,284.3" fill="#f6dc7c" stroke="#000" stroke-width="1" />
<rect x="894.7" y="293.7" width="2.2" height="2.4" fill="#000"/>
<rect x="937.3" y="243.7" width="3.2" height="80.0" fill="#000"/>
<rect x="938.3" y="243.7" width="1.3" height="79.2" fill="#c8a43c"/>
<polygon points="861.7,366.1 866.2,367.3 866.2,359.8 861.7,358.6" fill="#b4943c" stroke="#000" stroke-width="1" />
<polygon points="866.2,367.3 872.9,363.3 872.9,355.8 866.2,359.8" fill="#e8c868" stroke="#000" stroke-width="1" />
<polygon points="861.7,358.6 866.2,359.8 872.9,355.8 868.4,354.6" fill="#f6dc7c" stroke="#000" stroke-width="1" />
<polygon points="821.6,390.1 826.1,391.4 826.1,383.9 821.6,382.6" fill="#b4943c" stroke="#000" stroke-width="1" />
<polygon points="826.1,391.4 832.8,387.4 832.8,379.9 826.1,383.9" fill="#e8c868" stroke="#000" stroke-width="1" />
<polygon points="821.6,382.6 826.1,383.9 832.8,379.9 828.3,378.6" fill="#f6dc7c" stroke="#000" stroke-width="1" />
<polygon points="861.7,315.3 866.2,316.5 866.2,300.0 861.7,298.8" fill="#b4943c" stroke="#000" stroke-width="1" />
<polygon points="866.2,316.5 872.9,312.5 872.9,296.0 866.2,300.0" fill="#e8c868" stroke="#000" stroke-width="1" />
<polygon points="861.7,298.8 866.2,300.0 872.9,296.0 868.4,294.8" fill="#f6dc7c" stroke="#000" stroke-width="1" />
<polygon points="821.6,339.3 826.1,340.6 826.1,324.1 821.6,322.8" fill="#b4943c" stroke="#000" stroke-width="1" />
<polygon points="826.1,340.6 832.8,336.6 832.8,320.1 826.1,324.1" fill="#e8c868" stroke="#000" stroke-width="1" />
<polygon points="821.6,322.8 826.1,324.1 832.8,320.1 828.3,318.8" fill="#f6dc7c" stroke="#000" stroke-width="1" />
<polygon points="872.9,363.3 879.3,359.5 879.3,352.0 872.9,355.8" fill="#ecca66" stroke="#000" stroke-width="1" />
<polygon points="872.9,312.5 879.3,308.7 879.3,292.2 872.9,296.0" fill="#ecca66" stroke="#000" stroke-width="1" />
<polygon points="825.9,391.5 873.1,363.2 873.1,294.4 825.9,322.7" fill="url(#glass)"/>
<line x1="825.9" y1="322.7" x2="873.1" y2="294.4" stroke="#000" stroke-width="1.5" />
<line x1="825.9" y1="391.5" x2="873.1" y2="363.2" stroke="#000" stroke-width="1" stroke-dasharray="1 1"/>
<line x1="825.9" y1="391.5" x2="825.9" y2="322.7" stroke="#000" stroke-width="1" />
<line x1="873.1" y1="363.2" x2="873.1" y2="294.4" stroke="#000" stroke-width="1" stroke-dasharray="1 1"/>
<line x1="855.6" y1="334.0" x2="843.4" y2="360.9" stroke="#f00" stroke-width="1" />
<line x1="850.7" y1="351.2" x2="853.6" y2="353.8" stroke="#f00" stroke-width="1" />
<line x1="848.1" y1="346.5" x2="849.6" y2="346.0" stroke="#f00" stroke-width="1" />
<polygon points="819.7,395.2 826.1,391.4 826.1,383.9 819.7,387.7" fill="#ecca66" stroke="#000" stroke-width="1" />
<line x1="825.9" y1="391.5" x2="825.9" y2="384.0" stroke="#000" stroke-width="1.6" />
<polygon points="819.7,344.4 826.1,340.6 826.1,324.1 819.7,327.9" fill="#ecca66" stroke="#000" stroke-width="1" />
<line x1="825.9" y1="340.7" x2="825.9" y2="324.2" stroke="#000" stroke-width="1.6" />
<polygon points="866.2,367.3 870.7,368.6 870.7,361.1 866.2,359.8" fill="#b4943c" stroke="#000" stroke-width="1" />
<polygon points="870.7,368.6 877.4,364.6 877.4,357.1 870.7,361.1" fill="#e8c868" stroke="#000" stroke-width="1" />
<polygon points="866.2,359.8 870.7,361.1 877.4,357.1 872.9,355.8" fill="#f6dc7c" stroke="#000" stroke-width="1" />
<polygon points="826.1,391.4 830.6,392.7 830.6,385.2 826.1,383.9" fill="#b4943c" stroke="#000" stroke-width="1" />
<polygon points="830.6,392.7 837.3,388.7 837.3,381.2 830.6,385.2" fill="#e8c868" stroke="#000" stroke-width="1" />
<polygon points="826.1,383.9 830.6,385.2 837.3,381.2 832.8,379.9" fill="#f6dc7c" stroke="#000" stroke-width="1" />
<polygon points="866.2,316.5 870.7,317.8 870.7,301.3 866.2,300.0" fill="#b4943c" stroke="#000" stroke-width="1" />
<polygon points="870.7,317.8 877.4,313.8 877.4,297.3 870.7,301.3" fill="#e8c868" stroke="#000" stroke-width="1" />
<polygon points="866.2,300.0 870.7,301.3 877.4,297.3 872.9,296.0" fill="#f6dc7c" stroke="#000" stroke-width="1" />
<rect x="870.7" y="309.4" width="2.2" height="2.4" fill="#000"/>
<polygon points="826.1,340.6 830.6,341.9 830.6,325.4 826.1,324.1" fill="#b4943c" stroke="#000" stroke-width="1" />
<polygon points="830.6,341.9 837.3,337.9 837.3,321.4 830.6,325.4" fill="#e8c868" stroke="#000" stroke-width="1" />
<polygon points="826.1,324.1 830.6,325.4 837.3,321.4 832.8,320.1" fill="#f6dc7c" stroke="#000" stroke-width="1" />
<rect x="835.1" y="329.4" width="2.2" height="2.4" fill="#000"/>
<rect x="877.7" y="279.5" width="3.2" height="80.0" fill="#000"/>
<rect x="878.7" y="279.5" width="1.3" height="79.2" fill="#c8a43c"/>
<polygon points="802.1,401.8 806.6,403.1 806.6,395.6 802.1,394.3" fill="#b4943c" stroke="#000" stroke-width="1" />
<polygon points="806.6,403.1 813.3,399.1 813.3,391.6 806.6,395.6" fill="#e8c868" stroke="#000" stroke-width="1" />
<polygon points="802.1,394.3 806.6,395.6 813.3,391.6 808.8,390.3" fill="#f6dc7c" stroke="#000" stroke-width="1" />
<polygon points="762.0,425.9 766.5,427.1 766.5,419.6 762.0,418.4" fill="#b4943c" stroke="#000" stroke-width="1" />
<polygon points="766.5,427.1 773.2,423.1 773.2,415.6 766.5,419.6" fill="#e8c868" stroke="#000" stroke-width="1" />
<polygon points="762.0,418.4 766.5,419.6 773.2,415.6 768.7,414.4" fill="#f6dc7c" stroke="#000" stroke-width="1" />
<polygon points="802.1,351.0 806.6,352.3 806.6,335.8 802.1,334.5" fill="#b4943c" stroke="#000" stroke-width="1" />
<polygon points="806.6,352.3 813.3,348.3 813.3,331.8 806.6,335.8" fill="#e8c868" stroke="#000" stroke-width="1" />
<polygon points="802.1,334.5 806.6,335.8 813.3,331.8 808.8,330.5" fill="#f6dc7c" stroke="#000" stroke-width="1" />
<polygon points="762.0,375.1 766.5,376.3 766.5,359.8 762.0,358.6" fill="#b4943c" stroke="#000" stroke-width="1" />
<polygon points="766.5,376.3 773.2,372.3 773.2,355.8 766.5,359.8" fill="#e8c868" stroke="#000" stroke-width="1" />
<polygon points="762.0,358.6 766.5,359.8 773.2,355.8 768.7,354.6" fill="#f6dc7c" stroke="#000" stroke-width="1" />
<polygon points="813.3,399.1 819.7,395.2 819.7,387.7 813.3,391.6" fill="#ecca66" stroke="#000" stroke-width="1" />
<polygon points="813.3,348.3 819.7,344.4 819.7,327.9 813.3,331.8" fill="#ecca66" stroke="#000" stroke-width="1" />
<polygon points="766.3,427.3 813.5,399.0 813.5,330.2 766.3,358.5" fill="url(#glass)"/>
<line x1="766.3" y1="358.5" x2="813.5" y2="330.2" stroke="#000" stroke-width="1.5" />
<line x1="766.3" y1="427.3" x2="813.5" y2="399.0" stroke="#000" stroke-width="1" stroke-dasharray="1 1"/>
<line x1="766.3" y1="427.3" x2="766.3" y2="358.5" stroke="#000" stroke-width="1" />
<line x1="813.5" y1="399.0" x2="813.5" y2="330.2" stroke="#000" stroke-width="1" stroke-dasharray="1 1"/>
<line x1="796.0" y1="369.8" x2="783.9" y2="396.7" stroke="#f00" stroke-width="1" />
<line x1="791.1" y1="387.0" x2="794.0" y2="389.6" stroke="#f00" stroke-width="1" />
<line x1="788.6" y1="382.2" x2="790.0" y2="381.7" stroke="#f00" stroke-width="1" />
<polygon points="760.1,431.0 766.5,427.1 766.5,419.6 760.1,423.5" fill="#ecca66" stroke="#000" stroke-width="1" />
<line x1="766.3" y1="427.3" x2="766.3" y2="419.8" stroke="#000" stroke-width="1.6" />
<polygon points="760.1,380.2 766.5,376.3 766.5,359.8 760.1,363.7" fill="#ecca66" stroke="#000" stroke-width="1" />
<line x1="766.3" y1="376.5" x2="766.3" y2="360.0" stroke="#000" stroke-width="1.6" />
<polygon points="806.6,403.1 811.1,404.4 811.1,396.9 806.6,395.6" fill="#b4943c" stroke="#000" stroke-width="1" />
<polygon points="811.1,404.4 817.8,400.4 817.8,392.9 811.1,396.9" fill="#e8c868" stroke="#000" stroke-width="1" />
<polygon points="806.6,395.6 811.1,396.9 817.8,392.9 813.3,391.6" fill="#f6dc7c" stroke="#000" stroke-width="1" />
<polygon points="766.5,427.1 771.0,428.4 771.0,420.9 766.5,419.6" fill="#b4943c" stroke="#000" stroke-width="1" />
<polygon points="771.0,428.4 777.7,424.4 777.7,416.9 771.0,420.9" fill="#e8c868" stroke="#000" stroke-width="1" />
<polygon points="766.5,419.6 771.0,420.9 777.7,416.9 773.2,415.6" fill="#f6dc7c" stroke="#000" stroke-width="1" />
<polygon points="806.6,352.3 811.1,353.6 811.1,337.1 806.6,335.8" fill="#b4943c" stroke="#000" stroke-width="1" />
<polygon points="811.1,353.6 817.8,349.6 817.8,333.1 811.1,337.1" fill="#e8c868" stroke="#000" stroke-width="1" />
<polygon points="806.6,335.8 811.1,337.1 817.8,333.1 813.3,331.8" fill="#f6dc7c" stroke="#000" stroke-width="1" />
<rect x="811.1" y="345.1" width="2.2" height="2.4" fill="#000"/>
<polygon points="766.5,376.3 771.0,377.6 771.0,361.1 766.5,359.8" fill="#b4943c" stroke="#000" stroke-width="1" />
<polygon points="771.0,377.6 777.7,373.6 777.7,357.1 771.0,361.1" fill="#e8c868" stroke="#000" stroke-width="1" />
<polygon points="766.5,359.8 771.0,361.1 777.7,357.1 773.2,355.8" fill="#f6dc7c" stroke="#000" stroke-width="1" />
<rect x="775.5" y="365.2" width="2.2" height="2.4" fill="#000"/>
<rect x="818.1" y="315.2" width="3.2" height="80.0" fill="#000"/>
<rect x="819.1" y="315.2" width="1.3" height="79.2" fill="#c8a43c"/>
<polygon points="742.5,437.6 747.0,438.9 747.0,431.4 742.5,430.1" fill="#b4943c" stroke="#000" stroke-width="1" />
<polygon points="747.0,438.9 753.7,434.9 753.7,427.4 747.0,431.4" fill="#e8c868" stroke="#000" stroke-width="1" />
<polygon points="742.5,430.1 747.0,431.4 753.7,427.4 749.2,426.1" fill="#f6dc7c" stroke="#000" stroke-width="1" />
<polygon points="702.5,461.6 706.9,462.9 706.9,455.4 702.5,454.1" fill="#b4943c" stroke="#000" stroke-width="1" />
<polygon points="706.9,462.9 713.6,458.9 713.6,451.4 706.9,455.4" fill="#e8c868" stroke="#000" stroke-width="1" />
<polygon points="702.5,454.1 706.9,455.4 713.6,451.4 709.1,450.1" fill="#f6dc7c" stroke="#000" stroke-width="1" />
<polygon points="742.5,386.8 747.0,388.1 747.0,371.6 742.5,370.3" fill="#b4943c" stroke="#000" stroke-width="1" />
<polygon points="747.0,388.1 753.7,384.1 753.7,367.6 747.0,371.6" fill="#e8c868" stroke="#000" stroke-width="1" />
<polygon points="742.5,370.3 747.0,371.6 753.7,367.6 749.2,366.3" fill="#f6dc7c" stroke="#000" stroke-width="1" />
<polygon points="702.5,410.8 706.9,412.1 706.9,395.6 702.5,394.3" fill="#b4943c" stroke="#000" stroke-width="1" />
<polygon points="706.9,412.1 713.6,408.1 713.6,391.6 706.9,395.6" fill="#e8c868" stroke="#000" stroke-width="1" />
<polygon points="702.5,394.3 706.9,395.6 713.6,391.6 709.1,390.3" fill="#f6dc7c" stroke="#000" stroke-width="1" />
<polygon points="753.7,434.9 760.1,431.0 760.1,423.5 753.7,427.4" fill="#ecca66" stroke="#000" stroke-width="1" />
<polygon points="753.7,384.1 760.1,380.2 760.1,363.7 753.7,367.6" fill="#ecca66" stroke="#000" stroke-width="1" />
<polygon points="706.7,463.0 753.9,434.7 753.9,365.9 706.7,394.2" fill="url(#glass)"/>
<line x1="706.7" y1="394.2" x2="753.9" y2="365.9" stroke="#000" stroke-width="1.5" />
<line x1="706.7" y1="463.0" x2="753.9" y2="434.7" stroke="#000" stroke-width="1" stroke-dasharray="1 1"/>
<line x1="706.7" y1="463.0" x2="706.7" y2="394.2" stroke="#000" stroke-width="1" />
<line x1="753.9" y1="434.7" x2="753.9" y2="365.9" stroke="#000" stroke-width="1" stroke-dasharray="1 1"/>
<line x1="736.4" y1="405.5" x2="724.3" y2="432.4" stroke="#f00" stroke-width="1" />
<line x1="731.6" y1="422.7" x2="734.4" y2="425.3" stroke="#f00" stroke-width="1" />
<line x1="729.0" y1="418.0" x2="730.4" y2="417.5" stroke="#f00" stroke-width="1" />
<polygon points="700.5,466.8 706.9,462.9 706.9,455.4 700.5,459.3" fill="#ecca66" stroke="#000" stroke-width="1" />
<line x1="706.7" y1="463.0" x2="706.7" y2="455.5" stroke="#000" stroke-width="1.6" />
<polygon points="700.5,416.0 706.9,412.1 706.9,395.6 700.5,399.5" fill="#ecca66" stroke="#000" stroke-width="1" />
<line x1="706.7" y1="412.2" x2="706.7" y2="395.7" stroke="#000" stroke-width="1.6" />
<polygon points="747.0,438.9 751.5,440.1 751.5,432.6 747.0,431.4" fill="#b4943c" stroke="#000" stroke-width="1" />
<polygon points="751.5,440.1 758.2,436.1 758.2,428.6 751.5,432.6" fill="#e8c868" stroke="#000" stroke-width="1" />
<polygon points="747.0,431.4 751.5,432.6 758.2,428.6 753.7,427.4" fill="#f6dc7c" stroke="#000" stroke-width="1" />
<polygon points="706.9,462.9 711.4,464.2 711.4,456.7 706.9,455.4" fill="#b4943c" stroke="#000" stroke-width="1" />
<polygon points="711.4,464.2 718.1,460.2 718.1,452.7 711.4,456.7" fill="#e8c868" stroke="#000" stroke-width="1" />
<polygon points="706.9,455.4 711.4,456.7 718.1,452.7 713.6,451.4" fill="#f6dc7c" stroke="#000" stroke-width="1" />
<polygon points="747.0,388.1 751.5,389.3 751.5,372.8 747.0,371.6" fill="#b4943c" stroke="#000" stroke-width="1" />
<polygon points="751.5,389.3 758.2,385.3 758.2,368.8 751.5,372.8" fill="#e8c868" stroke="#000" stroke-width="1" />
<polygon points="747.0,371.6 751.5,372.8 758.2,368.8 753.7,367.6" fill="#f6dc7c" stroke="#000" stroke-width="1" />
<rect x="751.5" y="380.9" width="2.2" height="2.4" fill="#000"/>
<polygon points="706.9,412.1 711.4,413.4 711.4,396.9 706.9,395.6" fill="#b4943c" stroke="#000" stroke-width="1" />
<polygon points="711.4,413.4 718.1,409.4 718.1,392.9 711.4,396.9" fill="#e8c868" stroke="#000" stroke-width="1" />
<polygon points="706.9,395.6 711.4,396.9 718.1,392.9 713.6,391.6" fill="#f6dc7c" stroke="#000" stroke-width="1" />
<rect x="715.9" y="400.9" width="2.2" height="2.4" fill="#000"/>
<rect x="758.5" y="351.0" width="3.2" height="80.0" fill="#000"/>
<rect x="759.5" y="351.0" width="1.3" height="79.2" fill="#c8a43c"/>
<rect x="698.9" y="386.8" width="3.2" height="100.0" fill="#000"/>
<rect x="699.9" y="386.8" width="1.3" height="99.2" fill="#c8a43c"/>
<line x1="693.5" y1="391.4" x2="955.4" y2="234.3" stroke="#000" stroke-width="3.0" stroke-linecap="square"/>
<line x1="693.5" y1="391.4" x2="955.4" y2="234.3" stroke="#e6c455" stroke-width="1.0"/></g></svg>
</body></html>
